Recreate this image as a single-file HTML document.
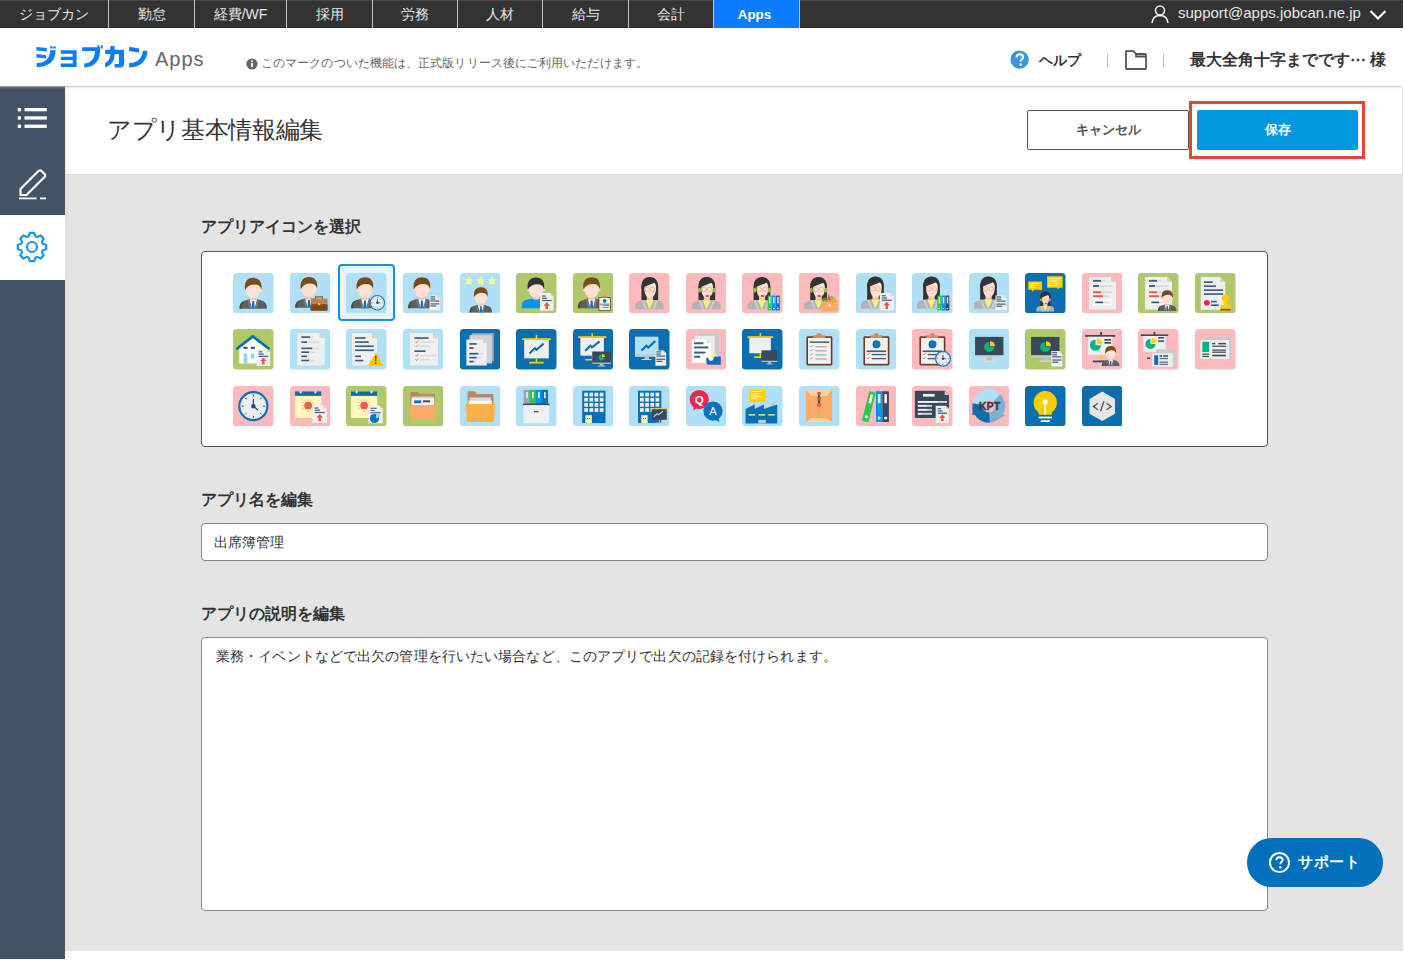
<!DOCTYPE html>
<html><head><meta charset="utf-8">
<style>
*{box-sizing:border-box;margin:0;padding:0}
html,body{width:1404px;height:960px;overflow:hidden;background:#fff;font-family:"Liberation Sans",sans-serif;color:#333}
.abs{position:absolute}
#topnav{position:absolute;left:0;top:0;width:1403px;height:28px;background:#333;box-shadow:inset 0 1px 0 #474747,inset 0 -1px 0 #2a2a2a}
#topnav .it{position:absolute;top:0;height:28px;line-height:29px;text-align:center;color:#e6e6e6;font-size:14px;border-right:1px solid #c4c4c4}
#topnav .apps{background:#0a7cff;color:#fff;font-weight:bold;border-right:1px solid #c4c4c4;font-size:13.4px;text-indent:-4px}
#hdr{position:absolute;left:0;top:28px;width:1401px;height:58px;background:#fff}
#side{position:absolute;left:0;top:86px;width:65px;height:873px;background:#435466}
#titlebar{position:absolute;left:65px;top:86px;width:1338px;height:88px;background:#fff;border-right:1.5px solid #e6e6e6}
#content{position:absolute;left:65px;top:174px;width:1338px;height:777px;background:#e4e4e4;box-shadow:inset 0 1px 1px rgba(0,0,0,.04)}
.lbl{position:absolute;left:201px;font-size:16px;font-weight:bold;color:#333;line-height:20px;white-space:nowrap}
.box{position:absolute;background:#fff;border:1px solid #555;border-radius:4px}
.ic{position:absolute;width:40px;height:40px}
</style></head><body>
<div id="topnav">
 <div class="it" style="left:0;width:109px">ジョブカン</div>
 <div class="it" style="left:109px;width:86px">勤怠</div>
 <div class="it" style="left:195px;width:92px">経費/WF</div>
 <div class="it" style="left:287px;width:86px">採用</div>
 <div class="it" style="left:373px;width:85px">労務</div>
 <div class="it" style="left:458px;width:85px">人材</div>
 <div class="it" style="left:543px;width:86px">給与</div>
 <div class="it" style="left:629px;width:85px">会計</div>
 <div class="it apps" style="left:714px;width:86px">Apps</div>
 <svg class="abs" style="left:1150px;top:4px" width="20" height="20" viewBox="0 0 20 20"><circle cx="10" cy="6.5" r="4.5" fill="none" stroke="#eee" stroke-width="1.6"/><path d="M2 19 C2.5 13.5 6 11.5 10 11.5 C14 11.5 17.5 13.5 18 19" fill="none" stroke="#eee" stroke-width="1.6"/></svg>
 <div class="abs" style="left:1178px;top:0;line-height:26px;font-size:15px;color:#e8e8e8">support@apps.jobcan.ne.jp</div>
 <svg class="abs" style="left:1369px;top:9px" width="18" height="12" viewBox="0 0 18 12"><path d="M1.5 2 L9 9.5 L16.5 2" fill="none" stroke="#fff" stroke-width="2.2"/></svg>
</div>
<div id="hdr">
 <svg class="abs" style="left:30px;top:12px" width="120" height="32" viewBox="0 0 120 32"><g fill="#0a7cff">
<path d="M6.4 7 L16.7 8.1 V11.5 L6.4 10.4Z M6.4 14.1 L16.2 15.2 V18.4 L6.4 17.5Z"/>
<path d="M20.1 10.3 H25.6 C25.6 20.5 19.5 27 6.8 27 V23.1 C15.5 23.1 20.1 18 20.1 10.3Z"/>
<rect x="20.1" y="6.3" width="2.4" height="2.2"/><rect x="23.2" y="6.3" width="2.4" height="2.2"/>
<path d="M30.8 10.3 H46.6 V26.9 H30.8 V23.5 H42.7 V20.1 H30.8 V16.7 H42.7 V13.7 H30.8Z"/>
<path d="M52.1 7.3 H70.1 V11.1 H52.1Z M65 11.1 H70.1 C70 21 64 27.4 54.3 27.4 V23.5 C61 23.5 65 18 65 11.1Z"/>
<path d="M67.3 5.2 L69.2 5.2 L69.6 8.6 L67.7 8.6Z M70.6 5.2 L72.5 5.2 L72.9 8.6 L71 8.6Z"/>
<path d="M75.2 9.8 H94 V14.1 H75.2Z M80.3 6 H84.6 V14 C84.6 20.5 82 25 75.2 27.4 V23 C79 21 80.3 18 80.3 14Z M88.9 9.8 H94 V24 C94 26.5 92.5 27.4 90.5 27.4 H84.6 V24 H88.9Z"/>
<path d="M99.1 6.8 L109 8.5 V12.4 L99.1 11.1Z M112.8 10.7 H117.5 C117 21 110 27.4 99.1 27.4 V23.1 C107 23.1 112.5 18 112.8 10.7Z"/>
</g></svg>
 <div class="abs" style="left:155px;top:18px;font-size:20px;color:#666;line-height:26px;letter-spacing:1px">Apps</div>
 <svg class="abs" style="left:246px;top:30px" width="12" height="12" viewBox="0 0 12 12"><circle cx="6" cy="6" r="5.6" fill="#666"/><rect x="5.1" y="5" width="1.8" height="4.2" fill="#fff"/><circle cx="6" cy="3.3" r="1" fill="#fff"/></svg>
 <div class="abs" style="left:261px;top:27px;font-size:11.8px;color:#666;line-height:16px;letter-spacing:0.09px;white-space:nowrap">このマークのついた機能は、正式版リリース後にご利用いただけます。</div>
 <svg class="abs" style="left:1010px;top:22px" width="20" height="20" viewBox="0 0 20 20"><circle cx="9.6" cy="9.6" r="9.2" fill="#3a97d9"/><path d="M6.6 7.4 C6.6 5.4 8 4.3 9.8 4.3 C11.7 4.3 13 5.5 13 7.2 C13 9.3 10.6 9.4 10.6 11.6" fill="none" stroke="#fff" stroke-width="2.1"/><circle cx="10.6" cy="14.6" r="1.3" fill="#fff"/></svg>
 <div class="abs" style="left:1039px;top:22px;font-size:14.3px;color:#333;line-height:20px;font-weight:bold">ヘルプ</div>
 <div class="abs" style="left:1107px;top:26px;width:1px;height:13px;background:#bbb"></div>
 <svg class="abs" style="left:1124px;top:21px" width="24" height="21" viewBox="0 0 24 21"><path d="M2 2.2 H9.5 L12 5 H21 Q22 5 22 6 V19 Q22 20 21 20 H3 Q2 20 2 19 Z M12 5 V7.5 H22" fill="none" stroke="#555" stroke-width="1.8" stroke-linejoin="round"/></svg>
 <div class="abs" style="left:1163px;top:26px;width:1px;height:13px;background:#bbb"></div>
 <div class="abs" style="left:1190px;top:22px;font-size:15.5px;color:#333;line-height:20px;font-weight:bold;white-space:nowrap">最大全角十字までです⋯ 様</div>
</div>
<div id="side">
 <svg class="abs" style="left:17px;top:22px" width="31" height="22" viewBox="0 0 31 22"><rect x="0.7" y="0" width="3.3" height="3.3" fill="#fff"/><rect x="7.5" y="0" width="22.3" height="3.3" fill="#fff"/><rect x="0.7" y="8.3" width="3.3" height="3.3" fill="#fff"/><rect x="7.5" y="8.3" width="22.3" height="3.3" fill="#fff"/><rect x="0.7" y="16.6" width="3.3" height="3.3" fill="#fff"/><rect x="7.5" y="16.6" width="22.3" height="3.3" fill="#fff"/></svg>
 <svg class="abs" style="left:17px;top:80px" width="32" height="34" viewBox="0 0 32 34"><path d="M3.5 28 V23 L21.5 5 Q23 3.6 24.5 5 L27.5 8 Q29 9.5 27.5 11 L9.5 29 H3.5 Z" fill="none" stroke="#fff" stroke-width="2.2" stroke-linejoin="round"/><rect x="2" y="31.5" width="17.5" height="1.8" fill="#fff"/><rect x="23" y="31.5" width="6" height="1.8" fill="#fff"/></svg>
 <div class="abs" style="left:0;top:129px;width:65px;height:65px;background:#fff"></div>
 <svg class="abs" style="left:15px;top:144px" width="34" height="34" viewBox="0 0 34 34"><path id="gear" fill="none" stroke="#1a9ae0" stroke-width="2.2" stroke-linejoin="round" d="M13.73 6.29 L14.75 2.78 L19.25 2.78 L20.27 6.29 L22.26 7.11 L25.46 5.35 L28.65 8.54 L26.89 11.74 L27.71 13.73 L31.22 14.75 L31.22 19.25 L27.71 20.27 L26.89 22.26 L28.65 25.46 L25.46 28.65 L22.26 26.89 L20.27 27.71 L19.25 31.22 L14.75 31.22 L13.73 27.71 L11.74 26.89 L8.54 28.65 L5.35 25.46 L7.11 22.26 L6.29 20.27 L2.78 19.25 L2.78 14.75 L6.29 13.73 L7.11 11.74 L5.35 8.54 L8.54 5.35 L11.74 7.11 Z"/><circle cx="17" cy="17" r="5" fill="none" stroke="#1a9ae0" stroke-width="2.2"/></svg>
</div>
<div id="titlebar">
 <div class="abs" style="left:42px;top:29px;font-size:24px;color:#333;line-height:30px;letter-spacing:-0.35px;white-space:nowrap">アプリ基本情報編集</div>
 <div class="abs" style="left:962px;top:24px;width:162px;height:40px;border:1px solid #555;border-radius:2px;text-align:center;line-height:38px;font-size:13px;font-weight:bold;color:#555">キャンセル</div>
 <div class="abs" style="left:1132px;top:24px;width:161px;height:40px;background:#0099dd;border-radius:2px;text-align:center;line-height:40px;font-size:13px;font-weight:bold;color:#fff">保存</div>
 <div class="abs" style="left:1124px;top:15px;width:176px;height:58px;border:3px solid #e8433a"></div>
</div>
<div id="content"></div>
<div class="abs" style="left:0;top:86px;width:1401px;height:4px;background:linear-gradient(rgba(180,180,180,.66) 0.5px,rgba(180,180,180,.22) 1.5px,rgba(180,180,180,.07) 2.5px,rgba(180,180,180,0) 3.5px)"></div>
<div class="abs" style="left:65px;top:86px;width:5px;height:88px;background:linear-gradient(90deg,rgba(0,0,0,.06),rgba(0,0,0,0))"></div>
<div class="lbl" style="top:217px">アプリアイコンを選択</div>
<div class="box" style="left:201px;top:251px;width:1067px;height:196px"></div>
<!--ICONS--><div style="position:absolute;left:338.3px;top:264.3px;width:56.5px;height:56.5px;border:2.2px solid #1592dc;border-radius:4px;background:#e8f3fc"></div><svg style="position:absolute;left:233.20px;top:272.50px" width="40.5" height="40.5" viewBox="0 0 40 40"><rect width="40" height="40" rx="3.5" fill="#afe0f6"/><path d="M6.5 35.2 C6.5 30.2 8.3 28.2 11.8 27.2 L16.5 25.8 H23.5 L28.2 27.2 C31.7 28.2 33.5 30.2 33.5 35.2 Z" fill="#5f5f5f"/><path d="M11 28 C9 29.5 8.5 31.5 8.5 35.2 H6.5 C6.5 31 7.6 29 11 28Z" fill="#4a4a4a"/><path d="M16.2 25.8 H23.8 L21.3 35.2 H18.7 Z" fill="#f4f4f4"/><path d="M15.6 26 L18.7 35.2 H16.6 L14.2 27 Z M24.4 26 L21.3 35.2 H23.4 L25.8 27Z" fill="#777"/><path d="M19.1 27.6 H20.9 L21.5 35.2 H18.5 Z" fill="#0b72c4"/><rect x="17.3" y="21.5" width="5.4" height="4.8" fill="#f5c8b3"/><path d="M17.3 25.2 Q20 27.2 22.7 25.2 V26 Q20 28 17.3 26Z" fill="#efb9a0"/><circle cx="12.7" cy="17.2" r="1.6" fill="#fad3c3"/><circle cx="27.3" cy="17.2" r="1.6" fill="#fad3c3"/><path d="M12.8 15 C12.8 10.5 16 9 20 9 C24 9 27.2 10.5 27.2 15 C27.2 21 24.7 24.9 20 24.9 C15.3 24.9 12.8 21 12.8 15 Z" fill="#fde1d5"/><path d="M11.9 16.8 C10.9 8.6 14.2 4.8 20 4.8 C25.8 4.8 29.1 8.6 28.1 16.2 C27.4 13.2 25 11.3 21.3 11.3 C17 11.3 13.6 13.2 11.9 16.8 Z" fill="#7b4a19"/></svg>
<svg style="position:absolute;left:289.78px;top:272.50px" width="40.5" height="40.5" viewBox="0 0 40 40"><rect width="40" height="40" rx="3.5" fill="#afe0f6"/><g transform="translate(-1.3 -0.9) scale(1)"><path d="M6.5 35.2 C6.5 30.2 8.3 28.2 11.8 27.2 L16.5 25.8 H23.5 L28.2 27.2 C31.7 28.2 33.5 30.2 33.5 35.2 Z" fill="#5f5f5f"/><path d="M11 28 C9 29.5 8.5 31.5 8.5 35.2 H6.5 C6.5 31 7.6 29 11 28Z" fill="#4a4a4a"/><path d="M16.2 25.8 H23.8 L21.3 35.2 H18.7 Z" fill="#f4f4f4"/><path d="M15.6 26 L18.7 35.2 H16.6 L14.2 27 Z M24.4 26 L21.3 35.2 H23.4 L25.8 27Z" fill="#777"/><path d="M19.1 27.6 H20.9 L21.5 35.2 H18.5 Z" fill="#0b72c4"/><rect x="17.3" y="21.5" width="5.4" height="4.8" fill="#f5c8b3"/><path d="M17.3 25.2 Q20 27.2 22.7 25.2 V26 Q20 28 17.3 26Z" fill="#efb9a0"/><circle cx="12.7" cy="17.2" r="1.6" fill="#fad3c3"/><circle cx="27.3" cy="17.2" r="1.6" fill="#fad3c3"/><path d="M12.8 15 C12.8 10.5 16 9 20 9 C24 9 27.2 10.5 27.2 15 C27.2 21 24.7 24.9 20 24.9 C15.3 24.9 12.8 21 12.8 15 Z" fill="#fde1d5"/><path d="M11.9 16.8 C10.9 8.6 14.2 4.8 20 4.8 C25.8 4.8 29.1 8.6 28.1 16.2 C27.4 13.2 25 11.3 21.3 11.3 C17 11.3 13.6 13.2 11.9 16.8 Z" fill="#7b4a19"/></g><path d="M24.7 23 H32.5 V26 H31.3 V24.2 H25.9 V26 H24.7Z" fill="#8a5a36"/><rect x="20.4" y="25.3" width="16.7" height="11.9" rx="1" fill="#b98250"/><rect x="20.4" y="30.8" width="16.7" height="6.4" rx="1" fill="#7d4a1a"/><rect x="27.7" y="29.6" width="2.2" height="2" fill="#ffcc00"/></svg>
<svg style="position:absolute;left:346.36px;top:272.50px" width="40.5" height="40.5" viewBox="0 0 40 40"><rect width="40" height="40" rx="3.5" fill="#afe0f6"/><g transform="translate(-1.3 -0.5) scale(1)"><path d="M6.5 35.2 C6.5 30.2 8.3 28.2 11.8 27.2 L16.5 25.8 H23.5 L28.2 27.2 C31.7 28.2 33.5 30.2 33.5 35.2 Z" fill="#5f5f5f"/><path d="M11 28 C9 29.5 8.5 31.5 8.5 35.2 H6.5 C6.5 31 7.6 29 11 28Z" fill="#4a4a4a"/><path d="M16.2 25.8 H23.8 L21.3 35.2 H18.7 Z" fill="#f4f4f4"/><path d="M15.6 26 L18.7 35.2 H16.6 L14.2 27 Z M24.4 26 L21.3 35.2 H23.4 L25.8 27Z" fill="#777"/><path d="M19.1 27.6 H20.9 L21.5 35.2 H18.5 Z" fill="#0b72c4"/><rect x="17.3" y="21.5" width="5.4" height="4.8" fill="#f5c8b3"/><path d="M17.3 25.2 Q20 27.2 22.7 25.2 V26 Q20 28 17.3 26Z" fill="#efb9a0"/><circle cx="12.7" cy="17.2" r="1.6" fill="#fad3c3"/><circle cx="27.3" cy="17.2" r="1.6" fill="#fad3c3"/><path d="M12.8 15 C12.8 10.5 16 9 20 9 C24 9 27.2 10.5 27.2 15 C27.2 21 24.7 24.9 20 24.9 C15.3 24.9 12.8 21 12.8 15 Z" fill="#fde1d5"/><path d="M11.9 16.8 C10.9 8.6 14.2 4.8 20 4.8 C25.8 4.8 29.1 8.6 28.1 16.2 C27.4 13.2 25 11.3 21.3 11.3 C17 11.3 13.6 13.2 11.9 16.8 Z" fill="#7b4a19"/></g><circle cx="31" cy="29.4" r="7.10" fill="#e8eef2" stroke="#1a7ecb" stroke-width="1.0"/><line x1="31.00" y1="24.54" x2="31.00" y2="23.47" stroke="#2f4d66" stroke-width="0.68"/><line x1="34.44" y1="25.96" x2="35.19" y2="25.21" stroke="#2f4d66" stroke-width="0.68"/><line x1="35.86" y1="29.40" x2="36.93" y2="29.40" stroke="#2f4d66" stroke-width="0.68"/><line x1="34.44" y1="32.84" x2="35.19" y2="33.59" stroke="#2f4d66" stroke-width="0.68"/><line x1="31.00" y1="34.26" x2="31.00" y2="35.33" stroke="#2f4d66" stroke-width="0.68"/><line x1="27.56" y1="32.84" x2="26.81" y2="33.59" stroke="#2f4d66" stroke-width="0.68"/><line x1="26.14" y1="29.40" x2="25.07" y2="29.40" stroke="#2f4d66" stroke-width="0.68"/><line x1="27.56" y1="25.96" x2="26.81" y2="25.21" stroke="#2f4d66" stroke-width="0.68"/><line x1="31" y1="29.4" x2="31" y2="25.75" stroke="#2f4d66" stroke-width="0.84"/><line x1="31" y1="29.4" x2="34.19" y2="29.40" stroke="#2f4d66" stroke-width="0.76"/><circle cx="31" cy="29.4" r="1.22" fill="#2f4d66"/></svg>
<svg style="position:absolute;left:402.94px;top:272.50px" width="40.5" height="40.5" viewBox="0 0 40 40"><rect width="40" height="40" rx="3.5" fill="#afe0f6"/><g transform="translate(-1.3 -0.5) scale(1)"><path d="M6.5 35.2 C6.5 30.2 8.3 28.2 11.8 27.2 L16.5 25.8 H23.5 L28.2 27.2 C31.7 28.2 33.5 30.2 33.5 35.2 Z" fill="#5f5f5f"/><path d="M11 28 C9 29.5 8.5 31.5 8.5 35.2 H6.5 C6.5 31 7.6 29 11 28Z" fill="#4a4a4a"/><path d="M16.2 25.8 H23.8 L21.3 35.2 H18.7 Z" fill="#f4f4f4"/><path d="M15.6 26 L18.7 35.2 H16.6 L14.2 27 Z M24.4 26 L21.3 35.2 H23.4 L25.8 27Z" fill="#777"/><path d="M19.1 27.6 H20.9 L21.5 35.2 H18.5 Z" fill="#0b72c4"/><rect x="17.3" y="21.5" width="5.4" height="4.8" fill="#f5c8b3"/><path d="M17.3 25.2 Q20 27.2 22.7 25.2 V26 Q20 28 17.3 26Z" fill="#efb9a0"/><circle cx="12.7" cy="17.2" r="1.6" fill="#fad3c3"/><circle cx="27.3" cy="17.2" r="1.6" fill="#fad3c3"/><path d="M12.8 15 C12.8 10.5 16 9 20 9 C24 9 27.2 10.5 27.2 15 C27.2 21 24.7 24.9 20 24.9 C15.3 24.9 12.8 21 12.8 15 Z" fill="#fde1d5"/><path d="M11.9 16.8 C10.9 8.6 14.2 4.8 20 4.8 C25.8 4.8 29.1 8.6 28.1 16.2 C27.4 13.2 25 11.3 21.3 11.3 C17 11.3 13.6 13.2 11.9 16.8 Z" fill="#7b4a19"/></g><g transform="translate(26.2 22.3) scale(1)"><path d="M0 0 H7.9 L10.5 2.6 V14.4 H0 Z" fill="#efefef"/><path d="M7.9 0 L10.5 2.6 H7.9 Z" fill="#d3d3d3"/><rect x="0.90" y="0.75" width="4.70" height="1.15" fill="#45627c"/><rect x="0.90" y="2.85" width="4.70" height="1.15" fill="#45627c"/><rect x="0.90" y="4.75" width="8.80" height="1.15" fill="#45627c"/><rect x="0.90" y="7.65" width="8.80" height="1.15" fill="#45627c"/><rect x="0.90" y="9.65" width="5.70" height="1.15" fill="#45627c"/><rect x="0.90" y="11.70" width="5.00" height="1.50" fill="#fff"/></g></svg>
<svg style="position:absolute;left:459.52px;top:272.50px" width="40.5" height="40.5" viewBox="0 0 40 40"><rect width="40" height="40" rx="3.5" fill="#afe0f6"/><polygon points="8.80,2.90 10.10,6.02 13.46,6.29 10.90,8.48 11.68,11.76 8.80,10.00 5.92,11.76 6.70,8.48 4.14,6.29 7.50,6.02" fill="#fbfb8a"/><polygon points="20.20,2.90 21.50,6.02 24.86,6.29 22.30,8.48 23.08,11.76 20.20,10.00 17.32,11.76 18.10,8.48 15.54,6.29 18.90,6.02" fill="#fbfb8a"/><polygon points="31.70,2.90 33.00,6.02 36.36,6.29 33.80,8.48 34.58,11.76 31.70,10.00 28.82,11.76 29.60,8.48 27.04,6.29 30.40,6.02" fill="#fbfb8a"/><g transform="translate(4.2 10.2) scale(0.82)"><path d="M6.5 35.2 C6.5 30.2 8.3 28.2 11.8 27.2 L16.5 25.8 H23.5 L28.2 27.2 C31.7 28.2 33.5 30.2 33.5 35.2 Z" fill="#5f5f5f"/><path d="M11 28 C9 29.5 8.5 31.5 8.5 35.2 H6.5 C6.5 31 7.6 29 11 28Z" fill="#4a4a4a"/><path d="M16.2 25.8 H23.8 L21.3 35.2 H18.7 Z" fill="#f4f4f4"/><path d="M15.6 26 L18.7 35.2 H16.6 L14.2 27 Z M24.4 26 L21.3 35.2 H23.4 L25.8 27Z" fill="#777"/><path d="M19.1 27.6 H20.9 L21.5 35.2 H18.5 Z" fill="#0b72c4"/><rect x="17.3" y="21.5" width="5.4" height="4.8" fill="#f5c8b3"/><path d="M17.3 25.2 Q20 27.2 22.7 25.2 V26 Q20 28 17.3 26Z" fill="#efb9a0"/><circle cx="12.7" cy="17.2" r="1.6" fill="#fad3c3"/><circle cx="27.3" cy="17.2" r="1.6" fill="#fad3c3"/><path d="M12.8 15 C12.8 10.5 16 9 20 9 C24 9 27.2 10.5 27.2 15 C27.2 21 24.7 24.9 20 24.9 C15.3 24.9 12.8 21 12.8 15 Z" fill="#fde1d5"/><path d="M11.9 16.8 C10.9 8.6 14.2 4.8 20 4.8 C25.8 4.8 29.1 8.6 28.1 16.2 C27.4 13.2 25 11.3 21.3 11.3 C17 11.3 13.6 13.2 11.9 16.8 Z" fill="#7b4a19"/></g></svg>
<svg style="position:absolute;left:516.10px;top:272.50px" width="40.5" height="40.5" viewBox="0 0 40 40"><rect width="40" height="40" rx="3.5" fill="#afc86b"/><g transform="translate(-0.3 -0.3) scale(1)"><path d="M6 35.2 V32 C6 28.5 9 26.5 13 26.2 L16.5 25.8 H23.5 L27 26.2 C31 26.5 34 28.5 34 32 V35.2 Z" fill="#0096f0"/><rect x="17.3" y="21.5" width="5.4" height="4.8" fill="#f5c8b3"/><path d="M17.3 25.2 Q20 27.2 22.7 25.2 V26 Q20 28 17.3 26Z" fill="#efb9a0"/><circle cx="12.7" cy="17.2" r="1.6" fill="#fad3c3"/><circle cx="27.3" cy="17.2" r="1.6" fill="#fad3c3"/><path d="M12.8 15 C12.8 10.5 16 9 20 9 C24 9 27.2 10.5 27.2 15 C27.2 21 24.7 24.9 20 24.9 C15.3 24.9 12.8 21 12.8 15 Z" fill="#fde1d5"/><path d="M11.9 16.8 C10.9 8.6 14.2 4.8 20 4.8 C25.8 4.8 29.1 8.6 28.1 16.2 C27.4 13.2 25 11.3 21.3 11.3 C17 11.3 13.6 13.2 11.9 16.8 Z" fill="#333"/></g><g transform="translate(23.7 19.8) scale(1)"><path d="M0 0 H10.2 L13.4 3.2 V17.4 H0 Z" fill="#efefef"/><path d="M10.2 0 L13.4 3.2 H10.2 Z" fill="#d3d3d3"/><rect x="2.00" y="2.4" width="3.60" height="1.15" fill="#3b5b78"/><rect x="2.00" y="4.6" width="5.00" height="1.15" fill="#3b5b78"/><rect x="2.00" y="6.8" width="9.50" height="1.15" fill="#3b5b78"/><path d="M6.70 8.90 L9.90 12.30 H7.90 V15.80 H5.50 V12.30 H3.50 Z" fill="#f0524a"/></g></svg>
<svg style="position:absolute;left:572.68px;top:272.50px" width="40.5" height="40.5" viewBox="0 0 40 40"><rect width="40" height="40" rx="3.5" fill="#afc86b"/><g transform="translate(-1.6 -0.5) scale(1)"><path d="M6.5 35.2 C6.5 30.2 8.3 28.2 11.8 27.2 L16.5 25.8 H23.5 L28.2 27.2 C31.7 28.2 33.5 30.2 33.5 35.2 Z" fill="#5f5f5f"/><path d="M11 28 C9 29.5 8.5 31.5 8.5 35.2 H6.5 C6.5 31 7.6 29 11 28Z" fill="#4a4a4a"/><path d="M16.2 25.8 H23.8 L21.3 35.2 H18.7 Z" fill="#f4f4f4"/><path d="M15.6 26 L18.7 35.2 H16.6 L14.2 27 Z M24.4 26 L21.3 35.2 H23.4 L25.8 27Z" fill="#777"/><path d="M19.1 27.6 H20.9 L21.5 35.2 H18.5 Z" fill="#0b72c4"/><rect x="17.3" y="21.5" width="5.4" height="4.8" fill="#f5c8b3"/><path d="M17.3 25.2 Q20 27.2 22.7 25.2 V26 Q20 28 17.3 26Z" fill="#efb9a0"/><circle cx="12.7" cy="17.2" r="1.6" fill="#fad3c3"/><circle cx="27.3" cy="17.2" r="1.6" fill="#fad3c3"/><path d="M12.8 15 C12.8 10.5 16 9 20 9 C24 9 27.2 10.5 27.2 15 C27.2 21 24.7 24.9 20 24.9 C15.3 24.9 12.8 21 12.8 15 Z" fill="#fde1d5"/><path d="M11.9 16.8 C10.9 8.6 14.2 4.8 20 4.8 C25.8 4.8 29.1 8.6 28.1 16.2 C27.4 13.2 25 11.3 21.3 11.3 C17 11.3 13.6 13.2 11.9 16.8 Z" fill="#7b4a19"/></g><g transform="translate(21.8 20.4) scale(0.47)"><rect x="7.3" y="7.2" width="25.7" height="28.8" rx="1.4" fill="#6e3a22"/><rect x="8.9" y="8.8" width="22.5" height="25.6" fill="#f1f1f1"/><path d="M14.2 6.2 H17.6 Q18 4 20.1 4 Q22.2 4 22.6 6.2 H26 V8.8 H14.2 Z" fill="#d88a5c"/><circle cx="20.2" cy="15" r="3.9" fill="#0a72c4"/><rect x="10.5" y="21.2" width="19.2" height="1.6" fill="#3b5b78"/><path d="M11 24.7 l0.9 0.9 l1.6 -1.9" fill="none" stroke="#f0524a" stroke-width="0.7"/><rect x="15.5" y="24.599999999999998" width="14" height="1.3" fill="#3b5b78"/><path d="M11 28.7 l0.9 0.9 l1.6 -1.9" fill="none" stroke="#f0524a" stroke-width="0.7"/><rect x="15.5" y="28.599999999999998" width="14" height="1.3" fill="#3b5b78"/></g></svg>
<svg style="position:absolute;left:629.26px;top:272.50px" width="40.5" height="40.5" viewBox="0 0 40 40"><rect width="40" height="40" rx="3.5" fill="#fdbabd"/><path d="M12.3 27 V14 C12.3 7.5 15.5 3.9 20.5 3.9 C25.5 3.9 28.8 7.5 28.8 14 V27 Z" fill="#333"/><path d="M6.2 35.8 V32.5 C6.2 29.2 8.2 27.8 11.5 27.3 L16.5 26.6 H24.5 L29.5 27.3 C32.8 27.8 34.3 29.2 34.3 32.5 V35.8 Z" fill="#b4b4b4"/><path d="M14.5 26.9 L17.8 35.8 H15.8 L12.6 27.3Z M26.5 26.9 L23.2 35.8 H25.2 L28.4 27.3Z" fill="#cdcdcd"/><path d="M16.5 26.6 H24.4 L20.3 35.8 Z" fill="#f6f27a"/><rect x="17.6" y="21.8" width="6" height="5.2" fill="#f7cdb9"/><path d="M17.6 24.6 Q20.6 26.2 23.6 24.6 V25.4 Q20.6 27 17.6 25.4Z" fill="#efb9a0"/><path d="M15.2 14.5 C15.2 9.5 17.5 8.2 20.8 8.2 C24 8.2 26.8 9.5 26.8 14.5 C26.8 21.2 23.9 24.5 20.8 24.5 C17.5 24.5 15.1 21.2 15.2 14.5Z" fill="#fde1d5"/><path d="M12.4 15.5 C12 8 15.3 4.2 20.5 4.2 C25.5 4.2 28.9 8 28.7 14.8 C27.9 12.2 26.6 10.4 25 9.6 C21.5 11.4 16.5 12.6 12.4 15.5 Z" fill="#333"/><g fill="none" stroke="#e8b394" stroke-width="0.85"><circle cx="17.9" cy="16.2" r="2.2"/><circle cx="23.3" cy="16.2" r="2.2"/><path d="M20 16 H20.8"/></g></svg>
<svg style="position:absolute;left:685.84px;top:272.50px" width="40.5" height="40.5" viewBox="0 0 40 40"><rect width="40" height="40" rx="3.5" fill="#fdbabd"/><path d="M12.3 27 V14 C12.3 7.5 15.5 3.9 20.5 3.9 C25.5 3.9 28.8 7.5 28.8 14 V27 Z" fill="#333"/><path d="M6.2 35.8 V32.5 C6.2 29.2 8.2 27.8 11.5 27.3 L16.5 26.6 H24.5 L29.5 27.3 C32.8 27.8 34.3 29.2 34.3 32.5 V35.8 Z" fill="#b4b4b4"/><path d="M14.5 26.9 L17.8 35.8 H15.8 L12.6 27.3Z M26.5 26.9 L23.2 35.8 H25.2 L28.4 27.3Z" fill="#cdcdcd"/><path d="M16.5 26.6 H24.4 L20.3 35.8 Z" fill="#f6f27a"/><rect x="17.6" y="21.8" width="6" height="5.2" fill="#f7cdb9"/><path d="M17.6 24.6 Q20.6 26.2 23.6 24.6 V25.4 Q20.6 27 17.6 25.4Z" fill="#efb9a0"/><path d="M15.2 14.5 C15.2 9.5 17.5 8.2 20.8 8.2 C24 8.2 26.8 9.5 26.8 14.5 C26.8 21.2 23.9 24.5 20.8 24.5 C17.5 24.5 15.1 21.2 15.2 14.5Z" fill="#fde1d5"/><path d="M12.4 15.5 C12 8 15.3 4.2 20.5 4.2 C25.5 4.2 28.9 8 28.7 14.8 C27.9 12.2 26.6 10.4 25 9.6 C21.5 11.4 16.5 12.6 12.4 15.5 Z" fill="#333"/><g fill="none" stroke="#e8b394" stroke-width="0.85"><circle cx="17.9" cy="16.2" r="2.2"/><circle cx="23.3" cy="16.2" r="2.2"/><path d="M20 16 H20.8"/></g><ellipse cx="13.4" cy="17" rx="1.5" ry="2.4" fill="#8ac43f"/><ellipse cx="27.8" cy="17" rx="1.5" ry="2.4" fill="#8ac43f"/><path d="M27.5 19 Q27 22.5 22.5 22.8" fill="none" stroke="#555" stroke-width="0.5"/><ellipse cx="21" cy="22.7" rx="1.8" ry="1" fill="#e8413a"/></svg>
<svg style="position:absolute;left:742.42px;top:272.50px" width="40.5" height="40.5" viewBox="0 0 40 40"><rect width="40" height="40" rx="3.5" fill="#fdbabd"/><g transform="translate(-0.8 0) scale(1)"><path d="M12.3 27 V14 C12.3 7.5 15.5 3.9 20.5 3.9 C25.5 3.9 28.8 7.5 28.8 14 V27 Z" fill="#333"/><path d="M6.2 35.8 V32.5 C6.2 29.2 8.2 27.8 11.5 27.3 L16.5 26.6 H24.5 L29.5 27.3 C32.8 27.8 34.3 29.2 34.3 32.5 V35.8 Z" fill="#b4b4b4"/><path d="M14.5 26.9 L17.8 35.8 H15.8 L12.6 27.3Z M26.5 26.9 L23.2 35.8 H25.2 L28.4 27.3Z" fill="#cdcdcd"/><path d="M16.5 26.6 H24.4 L20.3 35.8 Z" fill="#f6f27a"/><rect x="17.6" y="21.8" width="6" height="5.2" fill="#f7cdb9"/><path d="M17.6 24.6 Q20.6 26.2 23.6 24.6 V25.4 Q20.6 27 17.6 25.4Z" fill="#efb9a0"/><path d="M15.2 14.5 C15.2 9.5 17.5 8.2 20.8 8.2 C24 8.2 26.8 9.5 26.8 14.5 C26.8 21.2 23.9 24.5 20.8 24.5 C17.5 24.5 15.1 21.2 15.2 14.5Z" fill="#fde1d5"/><path d="M12.4 15.5 C12 8 15.3 4.2 20.5 4.2 C25.5 4.2 28.9 8 28.7 14.8 C27.9 12.2 26.6 10.4 25 9.6 C21.5 11.4 16.5 12.6 12.4 15.5 Z" fill="#333"/><g fill="none" stroke="#e8b394" stroke-width="0.85"><circle cx="17.9" cy="16.2" r="2.2"/><circle cx="23.3" cy="16.2" r="2.2"/><path d="M20 16 H20.8"/></g><ellipse cx="13.4" cy="17" rx="1.5" ry="2.4" fill="#8ac43f"/><ellipse cx="27.8" cy="17" rx="1.5" ry="2.4" fill="#8ac43f"/><path d="M27.5 19 Q27 22.5 22.5 22.8" fill="none" stroke="#555" stroke-width="0.5"/><ellipse cx="21" cy="22.7" rx="1.8" ry="1" fill="#e8413a"/></g><rect x="25.4" y="22.3" width="3.8" height="14.8" rx="0.4" fill="#2dc653"/><rect x="26.74" y="23.78" width="1.38" height="6.22" fill="#f2f2f2"/><circle cx="27.30" cy="35.03" r="0.81" fill="#f2f2f2"/><rect x="29.45" y="22.3" width="3.8" height="14.8" rx="0.4" fill="#0096f0"/><rect x="30.79" y="23.78" width="1.38" height="6.22" fill="#f2f2f2"/><circle cx="31.35" cy="35.03" r="0.81" fill="#f2f2f2"/><rect x="33.5" y="22.3" width="3.8" height="14.8" rx="0.4" fill="#0a72c4"/><rect x="34.84" y="23.78" width="1.38" height="6.22" fill="#f2f2f2"/><circle cx="35.40" cy="35.03" r="0.81" fill="#f2f2f2"/></svg>
<svg style="position:absolute;left:799.00px;top:272.50px" width="40.5" height="40.5" viewBox="0 0 40 40"><rect width="40" height="40" rx="3.5" fill="#fdbabd"/><g transform="translate(-1.2 0) scale(1)"><path d="M12.3 27 V14 C12.3 7.5 15.5 3.9 20.5 3.9 C25.5 3.9 28.8 7.5 28.8 14 V27 Z" fill="#333"/><path d="M6.2 35.8 V32.5 C6.2 29.2 8.2 27.8 11.5 27.3 L16.5 26.6 H24.5 L29.5 27.3 C32.8 27.8 34.3 29.2 34.3 32.5 V35.8 Z" fill="#b4b4b4"/><path d="M14.5 26.9 L17.8 35.8 H15.8 L12.6 27.3Z M26.5 26.9 L23.2 35.8 H25.2 L28.4 27.3Z" fill="#cdcdcd"/><path d="M16.5 26.6 H24.4 L20.3 35.8 Z" fill="#f6f27a"/><rect x="17.6" y="21.8" width="6" height="5.2" fill="#f7cdb9"/><path d="M17.6 24.6 Q20.6 26.2 23.6 24.6 V25.4 Q20.6 27 17.6 25.4Z" fill="#efb9a0"/><path d="M15.2 14.5 C15.2 9.5 17.5 8.2 20.8 8.2 C24 8.2 26.8 9.5 26.8 14.5 C26.8 21.2 23.9 24.5 20.8 24.5 C17.5 24.5 15.1 21.2 15.2 14.5Z" fill="#fde1d5"/><path d="M12.4 15.5 C12 8 15.3 4.2 20.5 4.2 C25.5 4.2 28.9 8 28.7 14.8 C27.9 12.2 26.6 10.4 25 9.6 C21.5 11.4 16.5 12.6 12.4 15.5 Z" fill="#333"/><g fill="none" stroke="#e8b394" stroke-width="0.85"><circle cx="17.9" cy="16.2" r="2.2"/><circle cx="23.3" cy="16.2" r="2.2"/><path d="M20 16 H20.8"/></g><ellipse cx="13.4" cy="17" rx="1.5" ry="2.4" fill="#8ac43f"/><ellipse cx="27.8" cy="17" rx="1.5" ry="2.4" fill="#8ac43f"/><path d="M27.5 19 Q27 22.5 22.5 22.8" fill="none" stroke="#555" stroke-width="0.5"/><ellipse cx="21" cy="22.7" rx="1.8" ry="1" fill="#e8413a"/></g><circle cx="25.5" cy="26.8" r="2.6" fill="#2aa84a"/><circle cx="32.2" cy="25.3" r="2.6" fill="#8ac43f"/><path d="M28 27 L29.3 20.5 L31 26.5Z" fill="#e8413a"/><circle cx="35.5" cy="26.5" r="1.5" fill="#ffb400"/><rect x="22.2" y="27.4" width="16" height="10.8" fill="#fbab67"/><rect x="22.2" y="27.4" width="16" height="1.2" fill="#e89555"/><rect x="28.8" y="31.3" width="2.8" height="1.3" fill="#fff"/></svg>
<svg style="position:absolute;left:855.58px;top:272.50px" width="40.5" height="40.5" viewBox="0 0 40 40"><rect width="40" height="40" rx="3.5" fill="#afe0f6"/><g transform="translate(-1.3 -0.5) scale(1)"><path d="M12.3 27 V14 C12.3 7.5 15.5 3.9 20.5 3.9 C25.5 3.9 28.8 7.5 28.8 14 V27 Z" fill="#333"/><path d="M6.2 35.8 V32.5 C6.2 29.2 8.2 27.8 11.5 27.3 L16.5 26.6 H24.5 L29.5 27.3 C32.8 27.8 34.3 29.2 34.3 32.5 V35.8 Z" fill="#b4b4b4"/><path d="M14.5 26.9 L17.8 35.8 H15.8 L12.6 27.3Z M26.5 26.9 L23.2 35.8 H25.2 L28.4 27.3Z" fill="#cdcdcd"/><path d="M16.5 26.6 H24.4 L20.3 35.8 Z" fill="#f6f27a"/><rect x="17.6" y="21.8" width="6" height="5.2" fill="#f7cdb9"/><path d="M17.6 24.6 Q20.6 26.2 23.6 24.6 V25.4 Q20.6 27 17.6 25.4Z" fill="#efb9a0"/><path d="M15.2 14.5 C15.2 9.5 17.5 8.2 20.8 8.2 C24 8.2 26.8 9.5 26.8 14.5 C26.8 21.2 23.9 24.5 20.8 24.5 C17.5 24.5 15.1 21.2 15.2 14.5Z" fill="#fde1d5"/><path d="M12.4 15.5 C12 8 15.3 4.2 20.5 4.2 C25.5 4.2 28.9 8 28.7 14.8 C27.9 12.2 26.6 10.4 25 9.6 C21.5 11.4 16.5 12.6 12.4 15.5 Z" fill="#333"/><g fill="none" stroke="#e8b394" stroke-width="0.85"><circle cx="17.9" cy="16.2" r="2.2"/><circle cx="23.3" cy="16.2" r="2.2"/><path d="M20 16 H20.8"/></g></g><g transform="translate(23.4 19.5) scale(1)"><path d="M0 0 H10.8 L14 3.2 V17.6 H0 Z" fill="#efefef"/><path d="M10.8 0 L14 3.2 H10.8 Z" fill="#d3d3d3"/><rect x="2.09" y="2.4" width="3.76" height="1.15" fill="#3b5b78"/><rect x="2.09" y="4.6" width="5.22" height="1.15" fill="#3b5b78"/><rect x="2.09" y="6.8" width="9.93" height="1.15" fill="#3b5b78"/><path d="M7.00 9.00 L10.20 12.44 H8.20 V15.98 H5.80 V12.44 H3.80 Z" fill="#f0524a"/></g></svg>
<svg style="position:absolute;left:912.16px;top:272.50px" width="40.5" height="40.5" viewBox="0 0 40 40"><rect width="40" height="40" rx="3.5" fill="#afe0f6"/><g transform="translate(-1.3 -0.5) scale(1)"><path d="M12.3 27 V14 C12.3 7.5 15.5 3.9 20.5 3.9 C25.5 3.9 28.8 7.5 28.8 14 V27 Z" fill="#333"/><path d="M6.2 35.8 V32.5 C6.2 29.2 8.2 27.8 11.5 27.3 L16.5 26.6 H24.5 L29.5 27.3 C32.8 27.8 34.3 29.2 34.3 32.5 V35.8 Z" fill="#b4b4b4"/><path d="M14.5 26.9 L17.8 35.8 H15.8 L12.6 27.3Z M26.5 26.9 L23.2 35.8 H25.2 L28.4 27.3Z" fill="#cdcdcd"/><path d="M16.5 26.6 H24.4 L20.3 35.8 Z" fill="#f6f27a"/><rect x="17.6" y="21.8" width="6" height="5.2" fill="#f7cdb9"/><path d="M17.6 24.6 Q20.6 26.2 23.6 24.6 V25.4 Q20.6 27 17.6 25.4Z" fill="#efb9a0"/><path d="M15.2 14.5 C15.2 9.5 17.5 8.2 20.8 8.2 C24 8.2 26.8 9.5 26.8 14.5 C26.8 21.2 23.9 24.5 20.8 24.5 C17.5 24.5 15.1 21.2 15.2 14.5Z" fill="#fde1d5"/><path d="M12.4 15.5 C12 8 15.3 4.2 20.5 4.2 C25.5 4.2 28.9 8 28.7 14.8 C27.9 12.2 26.6 10.4 25 9.6 C21.5 11.4 16.5 12.6 12.4 15.5 Z" fill="#333"/><g fill="none" stroke="#e8b394" stroke-width="0.85"><circle cx="17.9" cy="16.2" r="2.2"/><circle cx="23.3" cy="16.2" r="2.2"/><path d="M20 16 H20.8"/></g></g><rect x="25.1" y="22.3" width="3.75" height="14.8" rx="0.4" fill="#2dc653"/><rect x="26.42" y="23.78" width="1.36" height="6.22" fill="#f2f2f2"/><circle cx="26.98" cy="35.03" r="0.80" fill="#f2f2f2"/><rect x="29.1" y="22.3" width="3.75" height="14.8" rx="0.4" fill="#0096f0"/><rect x="30.42" y="23.78" width="1.36" height="6.22" fill="#f2f2f2"/><circle cx="30.98" cy="35.03" r="0.80" fill="#f2f2f2"/><rect x="33.1" y="22.3" width="3.75" height="14.8" rx="0.4" fill="#364a5c"/><rect x="34.42" y="23.78" width="1.36" height="6.22" fill="#f2f2f2"/><circle cx="34.98" cy="35.03" r="0.80" fill="#f2f2f2"/></svg>
<svg style="position:absolute;left:968.74px;top:272.50px" width="40.5" height="40.5" viewBox="0 0 40 40"><rect width="40" height="40" rx="3.5" fill="#afe0f6"/><g transform="translate(-1.3 -0.5) scale(1)"><path d="M12.3 27 V14 C12.3 7.5 15.5 3.9 20.5 3.9 C25.5 3.9 28.8 7.5 28.8 14 V27 Z" fill="#333"/><path d="M6.2 35.8 V32.5 C6.2 29.2 8.2 27.8 11.5 27.3 L16.5 26.6 H24.5 L29.5 27.3 C32.8 27.8 34.3 29.2 34.3 32.5 V35.8 Z" fill="#b4b4b4"/><path d="M14.5 26.9 L17.8 35.8 H15.8 L12.6 27.3Z M26.5 26.9 L23.2 35.8 H25.2 L28.4 27.3Z" fill="#cdcdcd"/><path d="M16.5 26.6 H24.4 L20.3 35.8 Z" fill="#f6f27a"/><rect x="17.6" y="21.8" width="6" height="5.2" fill="#f7cdb9"/><path d="M17.6 24.6 Q20.6 26.2 23.6 24.6 V25.4 Q20.6 27 17.6 25.4Z" fill="#efb9a0"/><path d="M15.2 14.5 C15.2 9.5 17.5 8.2 20.8 8.2 C24 8.2 26.8 9.5 26.8 14.5 C26.8 21.2 23.9 24.5 20.8 24.5 C17.5 24.5 15.1 21.2 15.2 14.5Z" fill="#fde1d5"/><path d="M12.4 15.5 C12 8 15.3 4.2 20.5 4.2 C25.5 4.2 28.9 8 28.7 14.8 C27.9 12.2 26.6 10.4 25 9.6 C21.5 11.4 16.5 12.6 12.4 15.5 Z" fill="#333"/><g fill="none" stroke="#e8b394" stroke-width="0.85"><circle cx="17.9" cy="16.2" r="2.2"/><circle cx="23.3" cy="16.2" r="2.2"/><path d="M20 16 H20.8"/></g></g><g transform="translate(26.1 22.3) scale(1)"><path d="M0 0 H8.200000000000001 L10.8 2.6 V14.8 H0 Z" fill="#efefef"/><path d="M8.200000000000001 0 L10.8 2.6 H8.200000000000001 Z" fill="#d3d3d3"/><rect x="0.93" y="0.77" width="4.83" height="1.18" fill="#45627c"/><rect x="0.93" y="2.93" width="4.83" height="1.18" fill="#45627c"/><rect x="0.93" y="4.88" width="9.05" height="1.18" fill="#45627c"/><rect x="0.93" y="7.86" width="9.05" height="1.18" fill="#45627c"/><rect x="0.93" y="9.92" width="5.86" height="1.18" fill="#45627c"/><rect x="0.93" y="12.03" width="5.14" height="1.54" fill="#fff"/></g></svg>
<svg style="position:absolute;left:1025.32px;top:272.50px" width="40.5" height="40.5" viewBox="0 0 40 40"><rect width="40" height="40" rx="3.5" fill="#0b6eae"/><path d="M3.2 8.3 H16.8 V16.5 H9 L7.3 18.6 L6.5 16.5 H3.2Z" fill="#ffd000"/><g fill="#fff7b0"><rect x="5" y="10" width="8.5" height="0.8"/><rect x="5" y="11.8" width="7" height="0.8"/><rect x="5" y="13.6" width="5.5" height="0.8"/></g><path d="M21.8 3.2 H37.2 V14.6 H33.5 L32.5 16.4 L31.5 14.6 H21.8Z" fill="#ffd000"/><g fill="#fff7b0"><rect x="23.3" y="4.8" width="12" height="0.8"/><rect x="23.3" y="6.6" width="11" height="0.8"/><rect x="23.3" y="8.4" width="9.5" height="0.8"/><rect x="23.3" y="10.2" width="11" height="0.8"/><rect x="23.3" y="12" width="8" height="0.8"/></g><g transform="translate(7.35 15.8) scale(0.62)"><path d="M12.3 27 V14 C12.3 7.5 15.5 3.9 20.5 3.9 C25.5 3.9 28.8 7.5 28.8 14 V27 Z" fill="#333"/><path d="M6.2 35.8 V32.5 C6.2 29.2 8.2 27.8 11.5 27.3 L16.5 26.6 H24.5 L29.5 27.3 C32.8 27.8 34.3 29.2 34.3 32.5 V35.8 Z" fill="#b4b4b4"/><path d="M14.5 26.9 L17.8 35.8 H15.8 L12.6 27.3Z M26.5 26.9 L23.2 35.8 H25.2 L28.4 27.3Z" fill="#cdcdcd"/><path d="M16.5 26.6 H24.4 L20.3 35.8 Z" fill="#f6f27a"/><rect x="17.6" y="21.8" width="6" height="5.2" fill="#f7cdb9"/><path d="M17.6 24.6 Q20.6 26.2 23.6 24.6 V25.4 Q20.6 27 17.6 25.4Z" fill="#efb9a0"/><path d="M15.2 14.5 C15.2 9.5 17.5 8.2 20.8 8.2 C24 8.2 26.8 9.5 26.8 14.5 C26.8 21.2 23.9 24.5 20.8 24.5 C17.5 24.5 15.1 21.2 15.2 14.5Z" fill="#fde1d5"/><path d="M12.4 15.5 C12 8 15.3 4.2 20.5 4.2 C25.5 4.2 28.9 8 28.7 14.8 C27.9 12.2 26.6 10.4 25 9.6 C21.5 11.4 16.5 12.6 12.4 15.5 Z" fill="#333"/><g fill="none" stroke="#e8b394" stroke-width="0.85"><circle cx="17.9" cy="16.2" r="2.2"/><circle cx="23.3" cy="16.2" r="2.2"/><path d="M20 16 H20.8"/></g><ellipse cx="13.4" cy="17" rx="1.5" ry="2.4" fill="#8ac43f"/><ellipse cx="27.8" cy="17" rx="1.5" ry="2.4" fill="#8ac43f"/><path d="M27.5 19 Q27 22.5 22.5 22.8" fill="none" stroke="#555" stroke-width="0.5"/><ellipse cx="21" cy="22.7" rx="1.8" ry="1" fill="#e8413a"/></g></svg>
<svg style="position:absolute;left:1081.90px;top:272.50px" width="40.5" height="40.5" viewBox="0 0 40 40"><rect width="40" height="40" rx="3.5" fill="#fdbabd"/><path d="M6.9 3.9 H28.6 L33.6 8.9 V36 H6.9 Z" fill="#efefef"/><path d="M28.6 3.9 L33.6 8.9 H28.6Z" fill="#d3d3d3"/><rect x="10.9" y="6.80" width="8.10" height="1.8" fill="#3b5b78"/><rect x="19" y="6.80" width="4.60" height="1.8" fill="#d8dcdf"/><rect x="10.9" y="11.95" width="6.00" height="1.8" fill="#3b5b78"/><rect x="16.9" y="11.95" width="12.80" height="1.8" fill="#d8dcdf"/><rect x="10.9" y="18.10" width="8.10" height="1.8" fill="#f0524a"/><rect x="19" y="18.10" width="10.70" height="1.8" fill="#d8dcdf"/><rect x="10.9" y="22.00" width="10.10" height="1.8" fill="#f0524a"/><rect x="21" y="22.00" width="5.70" height="1.8" fill="#d8dcdf"/><rect x="10.9" y="26.1" width="18.8" height="5.5" fill="#fff"/><rect x="13.2" y="28.1" width="7.8" height="1.8" fill="#3b5b78"/><rect x="21" y="28.1" width="6.6" height="1.8" fill="#d8dcdf"/></svg>
<svg style="position:absolute;left:1138.48px;top:272.50px" width="40.5" height="40.5" viewBox="0 0 40 40"><rect width="40" height="40" rx="3.5" fill="#afc86b"/><path d="M6.9 3.9 H28.6 L33.6 8.9 V36 H6.9 Z" fill="#efefef"/><path d="M28.6 3.9 L33.6 8.9 H28.6Z" fill="#d3d3d3"/><rect x="10.9" y="6.80" width="8.10" height="1.8" fill="#3b5b78"/><rect x="19" y="6.80" width="4.60" height="1.8" fill="#d8dcdf"/><rect x="10.9" y="11.95" width="6.00" height="1.8" fill="#3b5b78"/><rect x="16.9" y="11.95" width="12.80" height="1.8" fill="#d8dcdf"/><rect x="10.9" y="18.10" width="8.10" height="1.8" fill="#f0524a"/><rect x="19" y="18.10" width="10.70" height="1.8" fill="#d8dcdf"/><rect x="10.9" y="22.00" width="10.10" height="1.8" fill="#f0524a"/><rect x="21" y="22.00" width="5.70" height="1.8" fill="#d8dcdf"/><rect x="10.9" y="26.1" width="18.8" height="5.5" fill="#fff"/><rect x="13.2" y="28.1" width="7.8" height="1.8" fill="#3b5b78"/><rect x="21" y="28.1" width="6.6" height="1.8" fill="#d8dcdf"/><g transform="translate(15.5 13.9) scale(0.67)"><path d="M6.5 35.2 C6.5 30.2 8.3 28.2 11.8 27.2 L16.5 25.8 H23.5 L28.2 27.2 C31.7 28.2 33.5 30.2 33.5 35.2 Z" fill="#5f5f5f"/><path d="M11 28 C9 29.5 8.5 31.5 8.5 35.2 H6.5 C6.5 31 7.6 29 11 28Z" fill="#4a4a4a"/><path d="M16.2 25.8 H23.8 L21.3 35.2 H18.7 Z" fill="#f4f4f4"/><path d="M15.6 26 L18.7 35.2 H16.6 L14.2 27 Z M24.4 26 L21.3 35.2 H23.4 L25.8 27Z" fill="#777"/><path d="M19.1 27.6 H20.9 L21.5 35.2 H18.5 Z" fill="#0b72c4"/><rect x="17.3" y="21.5" width="5.4" height="4.8" fill="#f5c8b3"/><path d="M17.3 25.2 Q20 27.2 22.7 25.2 V26 Q20 28 17.3 26Z" fill="#efb9a0"/><circle cx="12.7" cy="17.2" r="1.6" fill="#fad3c3"/><circle cx="27.3" cy="17.2" r="1.6" fill="#fad3c3"/><path d="M12.8 15 C12.8 10.5 16 9 20 9 C24 9 27.2 10.5 27.2 15 C27.2 21 24.7 24.9 20 24.9 C15.3 24.9 12.8 21 12.8 15 Z" fill="#fde1d5"/><path d="M11.9 16.8 C10.9 8.6 14.2 4.8 20 4.8 C25.8 4.8 29.1 8.6 28.1 16.2 C27.4 13.2 25 11.3 21.3 11.3 C17 11.3 13.6 13.2 11.9 16.8 Z" fill="#7b4a19"/></g></svg>
<svg style="position:absolute;left:1195.06px;top:272.50px" width="40.5" height="40.5" viewBox="0 0 40 40"><rect width="40" height="40" rx="3.5" fill="#afc86b"/><path d="M5.7 3.9 H24.8 L29.8 8.9 V36.4 H5.7 Z" fill="#efefef"/><path d="M24.8 3.9 L29.8 8.9 H24.8Z" fill="#d3d3d3"/><rect x="8.8" y="8.2" width="8.8" height="1.6" fill="#3b5b78"/><rect x="8.8" y="12.2" width="12" height="1.6" fill="#3b5b78"/><rect x="8.8" y="16.1" width="19" height="1.6" fill="#3b5b78"/><rect x="8.8" y="20" width="19" height="1.6" fill="#3b5b78"/><circle cx="11.7" cy="29.4" r="2.8" fill="#ff1a4a"/><rect x="15.9" y="27.4" width="5.6" height="1.6" fill="#3b5b78"/><rect x="15.9" y="31" width="7.6" height="1.6" fill="#3b5b78"/><circle cx="30.2" cy="25.3" r="3.7" fill="#ffcc00"/><path d="M28.3 27.5 H32.1 V31.5 H34.2 Q35.2 31.5 35.2 32.5 V35.5 H25.2 V32.5 Q25.2 31.5 26.2 31.5 H28.3Z" fill="#ffcc00"/><rect x="25.2" y="35.4" width="10" height="1.7" fill="#7a5636"/></svg>
<svg style="position:absolute;left:233.20px;top:329.08px" width="40.5" height="40.5" viewBox="0 0 40 40"><rect width="40" height="40" rx="3.5" fill="#afc86b"/><path d="M6.2 18 L19.6 7.5 L33 18 V34 H6.2Z" fill="#fff"/><path d="M4.2 19.2 L19.6 7.3 L35 19.2" fill="none" stroke="#0a6cb0" stroke-width="2.6" stroke-linecap="round" stroke-linejoin="round"/><rect x="10.3" y="17.6" width="4" height="2" fill="#364a5c"/><rect x="17.6" y="17.6" width="4" height="2" fill="#364a5c"/><rect x="10.5" y="24.2" width="3.6" height="9.8" fill="#8fd3f5"/><rect x="17.8" y="24.2" width="3.3" height="5" fill="#8fd3f5"/><g transform="translate(23.3 19.6) scale(1)"><path d="M0 0 H10.2 L13.4 3.2 V17 H0 Z" fill="#efefef"/><path d="M10.2 0 L13.4 3.2 H10.2 Z" fill="#d3d3d3"/><rect x="2.00" y="2.4" width="3.60" height="1.15" fill="#3b5b78"/><rect x="2.00" y="4.6" width="5.00" height="1.15" fill="#3b5b78"/><rect x="2.00" y="6.8" width="9.50" height="1.15" fill="#3b5b78"/><path d="M6.70 8.70 L9.90 12.02 H7.90 V15.44 H5.50 V12.02 H3.50 Z" fill="#f0524a"/></g></svg>
<svg style="position:absolute;left:289.78px;top:329.08px" width="40.5" height="40.5" viewBox="0 0 40 40"><rect width="40" height="40" rx="3.5" fill="#afe0f6"/><path d="M7.1 4 H29.200000000000003 L34.2 9 V36 H7.1 Z" fill="#efefef"/><path d="M29.200000000000003 4 L34.2 9 H29.200000000000003Z" fill="#d3d3d3"/><rect x="11.2" y="7.20" width="8.70" height="1.6" fill="#3b5b78"/><rect x="19.9" y="7.20" width="2.70" height="1.6" fill="#d8dcdf"/><rect x="11.2" y="12.20" width="5.85" height="1.6" fill="#3b5b78"/><rect x="17.05" y="12.20" width="12.05" height="1.6" fill="#d8dcdf"/><rect x="11.2" y="18.30" width="10.90" height="1.6" fill="#3b5b78"/><rect x="22.1" y="18.30" width="7.00" height="1.6" fill="#d8dcdf"/><rect x="11.2" y="22.10" width="7.80" height="1.6" fill="#3b5b78"/><rect x="19" y="22.10" width="5.50" height="1.6" fill="#d8dcdf"/><rect x="11.2" y="26.20" width="5.80" height="1.6" fill="#3b5b78"/><rect x="17" y="26.20" width="2.50" height="1.6" fill="#d8dcdf"/><rect x="11.2" y="30.30" width="7.80" height="1.6" fill="#3b5b78"/><rect x="19" y="30.30" width="5.50" height="1.6" fill="#d8dcdf"/></svg>
<svg style="position:absolute;left:346.36px;top:329.08px" width="40.5" height="40.5" viewBox="0 0 40 40"><rect width="40" height="40" rx="3.5" fill="#afe0f6"/><path d="M6 4 H25.6 L30.6 9 V36 H6 Z" fill="#efefef"/><path d="M25.6 4 L30.6 9 H25.6Z" fill="#d3d3d3"/><rect x="9" y="8.10" width="10.20" height="1.6" fill="#3b5b78"/><rect x="9" y="12.10" width="13.40" height="1.6" fill="#3b5b78"/><rect x="9" y="16.20" width="18.40" height="1.6" fill="#3b5b78"/><rect x="9" y="20.20" width="18.40" height="1.6" fill="#3b5b78"/><rect x="9" y="26.20" width="5.80" height="1.6" fill="#3b5b78"/><rect x="9" y="30.40" width="8.10" height="1.6" fill="#3b5b78"/><path d="M29.4 22.6 L37 36.2 H21.8Z" fill="#ffc800"/><rect x="28.7" y="26.5" width="1.4" height="5.2" fill="#364a5c"/><rect x="28.7" y="32.8" width="1.4" height="1.5" fill="#364a5c"/></svg>
<svg style="position:absolute;left:402.94px;top:329.08px" width="40.5" height="40.5" viewBox="0 0 40 40"><rect width="40" height="40" rx="3.5" fill="#afe0f6"/><path d="M6.8 4 H29.6 L34.6 9 V36 H6.8 Z" fill="#efefef"/><path d="M29.6 4 L34.6 9 H29.6Z" fill="#d3d3d3"/><rect x="11.2" y="8.10" width="14.00" height="1.6" fill="#3b5b78"/><rect x="11.2" y="21.10" width="11.00" height="1.6" fill="#3b5b78"/><path d="M12.3 12.60 l1 1 l1.8 -2.1" fill="none" stroke="#f0524a" stroke-width="0.8"/><rect x="16.1" y="12.20" width="16.10" height="1.4" fill="#d8dcdf"/><path d="M12.3 16.70 l1 1 l1.8 -2.1" fill="none" stroke="#f0524a" stroke-width="0.8"/><rect x="16.1" y="16.30" width="10.90" height="1.4" fill="#d8dcdf"/><path d="M12.3 25.90 l1 1 l1.8 -2.1" fill="none" stroke="#f0524a" stroke-width="0.8"/><rect x="16.1" y="25.50" width="16.10" height="1.4" fill="#d8dcdf"/><path d="M12.3 30.10 l1 1 l1.8 -2.1" fill="none" stroke="#f0524a" stroke-width="0.8"/><rect x="16.1" y="29.70" width="10.90" height="1.4" fill="#d8dcdf"/></svg>
<svg style="position:absolute;left:459.52px;top:329.08px" width="40.5" height="40.5" viewBox="0 0 40 40"><rect width="40" height="40" rx="3.5" fill="#0b6eae"/><rect x="11.5" y="4" width="21.9" height="28" fill="#a0a8b4"/><rect x="9.3" y="6" width="22.2" height="28" fill="#cdd1d6"/><path d="M6.3 10.3 H22.9 L26.4 13.8 V36 H6.3 Z" fill="#efefef"/><path d="M22.9 10.3 L26.4 13.8 H22.9Z" fill="#d3d3d3"/><rect x="9.2" y="13.85" width="7.30" height="1.7" fill="#3b5b78"/><rect x="16.5" y="13.85" width="1.80" height="1.7" fill="#d8dcdf"/><rect x="9.2" y="17.95" width="4.40" height="1.7" fill="#3b5b78"/><rect x="13.6" y="17.95" width="2.00" height="1.7" fill="#d8dcdf"/><rect x="9.2" y="23.55" width="9.10" height="1.7" fill="#3b5b78"/><rect x="18.3" y="23.55" width="5.00" height="1.7" fill="#d8dcdf"/><rect x="9.2" y="27.45" width="7.30" height="1.7" fill="#3b5b78"/><rect x="16.5" y="27.45" width="5.10" height="1.7" fill="#d8dcdf"/><rect x="9.2" y="31.35" width="4.40" height="1.7" fill="#3b5b78"/><rect x="13.6" y="31.35" width="2.00" height="1.7" fill="#d8dcdf"/></svg>
<svg style="position:absolute;left:516.10px;top:329.08px" width="40.5" height="40.5" viewBox="0 0 40 40"><rect width="40" height="40" rx="3.5" fill="#0b6eae"/><rect x="19.5" y="6" width="1.5" height="4" fill="#ffd000"/><rect x="6" y="9.1" width="28.4" height="1.7" fill="#ffd000"/><rect x="8.1" y="10.8" width="24.3" height="18.2" fill="#efefef"/><rect x="19.5" y="29" width="1.5" height="3.6" fill="#ffd000"/><rect x="13" y="32.4" width="14.3" height="1.7" fill="#ffd000"/><polyline points="13.3,24.1 18.6,19 20.2,20.6 27.3,14.5" fill="none" stroke="#0b6eae" stroke-width="2.1" stroke-linejoin="miter"/></svg>
<svg style="position:absolute;left:572.68px;top:329.08px" width="40.5" height="40.5" viewBox="0 0 40 40"><rect width="40" height="40" rx="3.5" fill="#0b6eae"/><rect x="18.2" y="4" width="1.5" height="3.5" fill="#ffd000"/><rect x="5.1" y="7.1" width="27.8" height="1.7" fill="#ffd000"/><rect x="7.3" y="8.8" width="23.2" height="17.5" fill="#efefef"/><path d="M18.6 26.3 H20.1 V31.2 H12 V29.6 H18.6Z" fill="#ffd000"/><polyline points="12.05,21.6 17.2,16.6 18.8,18.2 26.3,12.2" fill="none" stroke="#0b6eae" stroke-width="2.1" stroke-linejoin="miter"/><g transform="translate(19 22.2)"><rect x="0" y="0" width="18.4" height="11" fill="#364a5c"/><rect x="0" y="11" width="18.4" height="1.10" fill="#cfcfcf"/><rect x="7.36" y="12.10" width="3.68" height="1.98" fill="#bdbdbd"/><rect x="5.52" y="14.08" width="7.36" height="0.66" fill="#dedede"/><path d="M9.2 5.94 V2.97 A2.97 2.97 0 1 0 12.17 5.94 Z" fill="#00b386"/><path d="M9.65 5.49 V2.52 A2.97 2.97 0 0 1 12.62 5.49 Z" fill="#ffd000"/></g></svg>
<svg style="position:absolute;left:629.26px;top:329.08px" width="40.5" height="40.5" viewBox="0 0 40 40"><rect width="40" height="40" rx="3.5" fill="#0b6eae"/><rect x="5.9" y="7.6" width="23.2" height="18" fill="#afe0f6"/><rect x="5.9" y="25.6" width="23.2" height="1.9" fill="#cfcfcf"/><rect x="15.3" y="27.5" width="4.4" height="2.2" fill="#bdbdbd"/><rect x="12.5" y="29.7" width="10" height="0.9" fill="#dedede"/><polyline points="12.3,21.3 17.3,16.6 19,18.2 26,11.8" fill="none" stroke="#0b6eae" stroke-width="2.1" stroke-linejoin="miter"/><g transform="translate(26.1 21.2) scale(1)"><path d="M0 0 H8.0 L10.6 2.6 V15.2 H0 Z" fill="#efefef"/><path d="M8.0 0 L10.6 2.6 H8.0 Z" fill="#d3d3d3"/><rect x="0.91" y="0.79" width="4.74" height="1.21" fill="#45627c"/><rect x="0.91" y="3.01" width="4.74" height="1.21" fill="#45627c"/><rect x="0.91" y="5.01" width="8.88" height="1.21" fill="#45627c"/><rect x="0.91" y="8.07" width="8.88" height="1.21" fill="#45627c"/><rect x="0.91" y="10.19" width="5.75" height="1.21" fill="#45627c"/><rect x="0.91" y="12.35" width="5.05" height="1.58" fill="#fff"/></g></svg>
<svg style="position:absolute;left:685.84px;top:329.08px" width="40.5" height="40.5" viewBox="0 0 40 40"><rect width="40" height="40" rx="3.5" fill="#fdbabd"/><rect x="12.1" y="4.1" width="20.4" height="24" fill="#c6c9cc"/><rect x="9" y="6.8" width="19.4" height="24" fill="#ececec"/><path d="M5.8 9.9 H20.5 L24.5 13.9 V33.5 H5.8Z" fill="#fdfdfd"/><path d="M20.5 9.9 L24.5 13.9 H20.5Z" fill="#dcdcdc"/><rect x="8" y="13.15" width="9.20" height="1.9" fill="#3b5b78"/><rect x="8" y="17.25" width="14.10" height="1.9" fill="#3b5b78"/><rect x="8" y="22.35" width="11.20" height="1.9" fill="#3b5b78"/><rect x="8" y="26.45" width="6.10" height="1.9" fill="#3b5b78"/><circle cx="27.8" cy="28.5" r="3.6" fill="#fff27a"/><path d="M20.1 28.4 H22 Q22.5 31.5 25 31.5 Q27 31.5 27.5 28 Q27.8 27.2 29 27.2 H34.4 V35.4 H23 Q20.1 35.4 20.1 32.5Z" fill="#0a6ec0"/><circle cx="24.6" cy="29.4" r="1.6" fill="#fff"/></svg>
<svg style="position:absolute;left:742.42px;top:329.08px" width="40.5" height="40.5" viewBox="0 0 40 40"><rect width="40" height="40" rx="3.5" fill="#0b6eae"/><rect x="17.4" y="4" width="1.5" height="3.5" fill="#ffd000"/><rect x="5.4" y="7.1" width="25.4" height="1.7" fill="#ffd000"/><rect x="7.2" y="8.8" width="21.3" height="15.2" fill="#efefef"/><path d="M17.4 24 H18.9 V28.6 H12 V27 H17.4Z" fill="#ffd000"/><g transform="translate(19.3 21.1)"><rect x="0" y="0" width="15.6" height="10.3" fill="#364a5c"/><rect x="0" y="10.3" width="15.6" height="1.03" fill="#cfcfcf"/><rect x="6.24" y="11.33" width="3.12" height="1.85" fill="#bdbdbd"/><rect x="4.68" y="13.18" width="6.24" height="0.62" fill="#dedede"/></g></svg>
<svg style="position:absolute;left:799.00px;top:329.08px" width="40.5" height="40.5" viewBox="0 0 40 40"><rect width="40" height="40" rx="3.5" fill="#afe0f6"/><g transform="translate(0 0) scale(1)"><rect x="7.3" y="7.2" width="25.7" height="28.8" rx="1.4" fill="#6e3a22"/><rect x="8.9" y="8.8" width="22.5" height="25.6" fill="#f1f1f1"/><path d="M14.2 6.2 H17.6 Q18 4 20.1 4 Q22.2 4 22.6 6.2 H26 V8.8 H14.2 Z" fill="#d88a5c"/><rect x="10.5" y="12.2" width="19.2" height="1.6" fill="#666"/><path d="M11 16.9 l0.9 0.9 l1.6 -1.9" fill="none" stroke="#f0524a" stroke-width="0.7"/><rect x="16.2" y="16.9" width="11.2" height="1.2" fill="#a8a8a8"/><path d="M11 21.0 l0.9 0.9 l1.6 -1.9" fill="none" stroke="#f0524a" stroke-width="0.7"/><rect x="16.2" y="21.0" width="11.2" height="1.2" fill="#a8a8a8"/><path d="M11 25.0 l0.9 0.9 l1.6 -1.9" fill="none" stroke="#f0524a" stroke-width="0.7"/><rect x="16.2" y="25.0" width="11.2" height="1.2" fill="#a8a8a8"/><path d="M11 29.0 l0.9 0.9 l1.6 -1.9" fill="none" stroke="#f0524a" stroke-width="0.7"/><rect x="16.2" y="29.0" width="11.2" height="1.2" fill="#a8a8a8"/></g></svg>
<svg style="position:absolute;left:855.58px;top:329.08px" width="40.5" height="40.5" viewBox="0 0 40 40"><rect width="40" height="40" rx="3.5" fill="#afe0f6"/><g transform="translate(0 0) scale(1)"><rect x="7.3" y="7.2" width="25.7" height="28.8" rx="1.4" fill="#6e3a22"/><rect x="8.9" y="8.8" width="22.5" height="25.6" fill="#f1f1f1"/><path d="M14.2 6.2 H17.6 Q18 4 20.1 4 Q22.2 4 22.6 6.2 H26 V8.8 H14.2 Z" fill="#d88a5c"/><circle cx="20.2" cy="15" r="3.9" fill="#0a72c4"/><rect x="10.5" y="21.2" width="19.2" height="1.6" fill="#3b5b78"/><path d="M11 24.7 l0.9 0.9 l1.6 -1.9" fill="none" stroke="#f0524a" stroke-width="0.7"/><rect x="15.5" y="24.599999999999998" width="14" height="1.3" fill="#3b5b78"/><path d="M11 28.7 l0.9 0.9 l1.6 -1.9" fill="none" stroke="#f0524a" stroke-width="0.7"/><rect x="15.5" y="28.599999999999998" width="14" height="1.3" fill="#3b5b78"/></g></svg>
<svg style="position:absolute;left:912.16px;top:329.08px" width="40.5" height="40.5" viewBox="0 0 40 40"><rect width="40" height="40" rx="3.5" fill="#fdbabd"/><g transform="translate(0 0) scale(1)"><rect x="7.3" y="7.2" width="25.7" height="28.8" rx="1.4" fill="#6e3a22"/><rect x="8.9" y="8.8" width="22.5" height="25.6" fill="#f1f1f1"/><path d="M14.2 6.2 H17.6 Q18 4 20.1 4 Q22.2 4 22.6 6.2 H26 V8.8 H14.2 Z" fill="#d88a5c"/><circle cx="20.2" cy="15" r="3.9" fill="#0a72c4"/><rect x="10.5" y="21.2" width="19.2" height="1.6" fill="#3b5b78"/><path d="M11 24.7 l0.9 0.9 l1.6 -1.9" fill="none" stroke="#f0524a" stroke-width="0.7"/><rect x="15.5" y="24.599999999999998" width="14" height="1.3" fill="#3b5b78"/><path d="M11 28.7 l0.9 0.9 l1.6 -1.9" fill="none" stroke="#f0524a" stroke-width="0.7"/><rect x="15.5" y="28.599999999999998" width="14" height="1.3" fill="#3b5b78"/></g><circle cx="30.6" cy="29.4" r="7.30" fill="#e8eef2" stroke="#1a7ecb" stroke-width="1.2"/><line x1="30.60" y1="24.34" x2="30.60" y2="23.24" stroke="#2f4d66" stroke-width="0.71"/><line x1="34.18" y1="25.82" x2="34.96" y2="25.04" stroke="#2f4d66" stroke-width="0.71"/><line x1="35.66" y1="29.40" x2="36.76" y2="29.40" stroke="#2f4d66" stroke-width="0.71"/><line x1="34.18" y1="32.98" x2="34.96" y2="33.76" stroke="#2f4d66" stroke-width="0.71"/><line x1="30.60" y1="34.46" x2="30.60" y2="35.56" stroke="#2f4d66" stroke-width="0.71"/><line x1="27.02" y1="32.98" x2="26.24" y2="33.76" stroke="#2f4d66" stroke-width="0.71"/><line x1="25.54" y1="29.40" x2="24.44" y2="29.40" stroke="#2f4d66" stroke-width="0.71"/><line x1="27.02" y1="25.82" x2="26.24" y2="25.04" stroke="#2f4d66" stroke-width="0.71"/><line x1="30.6" y1="29.4" x2="30.6" y2="25.61" stroke="#2f4d66" stroke-width="0.87"/><line x1="30.6" y1="29.4" x2="33.92" y2="29.40" stroke="#2f4d66" stroke-width="0.79"/><circle cx="30.6" cy="29.4" r="1.26" fill="#2f4d66"/></svg>
<svg style="position:absolute;left:968.74px;top:329.08px" width="40.5" height="40.5" viewBox="0 0 40 40"><rect width="40" height="40" rx="3.5" fill="#afe0f6"/><g transform="translate(6 7.8)"><rect x="0" y="0" width="28" height="18.3" fill="#364a5c"/><rect x="0" y="18.3" width="28" height="1.83" fill="#cfcfcf"/><rect x="11.20" y="20.13" width="5.60" height="3.29" fill="#bdbdbd"/><rect x="8.40" y="23.42" width="11.20" height="1.10" fill="#dedede"/><path d="M14.0 9.882000000000001 V4.941000000000001 A4.941000000000001 4.941000000000001 0 1 0 18.941000000000003 9.882000000000001 Z" fill="#00b386"/><path d="M14.74 9.14 V4.20 A4.941000000000001 4.941000000000001 0 0 1 19.68 9.14 Z" fill="#ffd000"/></g></svg>
<svg style="position:absolute;left:1025.32px;top:329.08px" width="40.5" height="40.5" viewBox="0 0 40 40"><rect width="40" height="40" rx="3.5" fill="#afc86b"/><g transform="translate(6 7.8)"><rect x="0" y="0" width="28" height="18.3" fill="#364a5c"/><rect x="0" y="18.3" width="28" height="1.83" fill="#cfcfcf"/><rect x="11.20" y="20.13" width="5.60" height="3.29" fill="#bdbdbd"/><rect x="8.40" y="23.42" width="11.20" height="1.10" fill="#dedede"/><path d="M14.0 9.882000000000001 V4.941000000000001 A4.941000000000001 4.941000000000001 0 1 0 18.941000000000003 9.882000000000001 Z" fill="#00b386"/><path d="M14.74 9.14 V4.20 A4.941000000000001 4.941000000000001 0 0 1 19.68 9.14 Z" fill="#ffd000"/></g><g transform="translate(26 21.8) scale(1)"><path d="M0 0 H8.200000000000001 L10.8 2.6 V15.5 H0 Z" fill="#efefef"/><path d="M8.200000000000001 0 L10.8 2.6 H8.200000000000001 Z" fill="#d3d3d3"/><rect x="0.93" y="0.81" width="4.83" height="1.24" fill="#45627c"/><rect x="0.93" y="3.07" width="4.83" height="1.24" fill="#45627c"/><rect x="0.93" y="5.11" width="9.05" height="1.24" fill="#45627c"/><rect x="0.93" y="8.23" width="9.05" height="1.24" fill="#45627c"/><rect x="0.93" y="10.39" width="5.86" height="1.24" fill="#45627c"/><rect x="0.93" y="12.59" width="5.14" height="1.61" fill="#fff"/></g></svg>
<svg style="position:absolute;left:1081.90px;top:329.08px" width="40.5" height="40.5" viewBox="0 0 40 40"><rect width="40" height="40" rx="3.5" fill="#fdbabd"/><rect x="17.9" y="2.8" width="1.8" height="4" fill="#364a5c"/><rect x="3.1" y="5.9" width="29.6" height="1.8" fill="#364a5c"/><rect x="6" y="7.7" width="23.8" height="17.8" fill="#efefef"/><path d="M13.3 16 V10.5 A5.5 5.5 0 1 0 18.8 16Z" fill="#00b386"/><path d="M14.8 14.6 V9.3 A5.3 5.3 0 0 1 20.1 14.6Z" fill="#ffd000"/><rect x="22.1" y="9.9" width="6.6" height="1.6" fill="#364a5c"/><rect x="22.1" y="12.9" width="6.6" height="1.6" fill="#364a5c"/><rect x="17.7" y="25.5" width="1.8" height="5.5" fill="#ffd000"/><rect x="10.8" y="31.1" width="13.5" height="1.8" fill="#364a5c"/><g transform="translate(15.35 13.6) scale(0.65)"><path d="M6.5 35.2 C6.5 30.2 8.3 28.2 11.8 27.2 L16.5 25.8 H23.5 L28.2 27.2 C31.7 28.2 33.5 30.2 33.5 35.2 Z" fill="#5f5f5f"/><path d="M11 28 C9 29.5 8.5 31.5 8.5 35.2 H6.5 C6.5 31 7.6 29 11 28Z" fill="#4a4a4a"/><path d="M16.2 25.8 H23.8 L21.3 35.2 H18.7 Z" fill="#f4f4f4"/><path d="M15.6 26 L18.7 35.2 H16.6 L14.2 27 Z M24.4 26 L21.3 35.2 H23.4 L25.8 27Z" fill="#777"/><path d="M19.1 27.6 H20.9 L21.5 35.2 H18.5 Z" fill="#0b72c4"/><rect x="17.3" y="21.5" width="5.4" height="4.8" fill="#f5c8b3"/><path d="M17.3 25.2 Q20 27.2 22.7 25.2 V26 Q20 28 17.3 26Z" fill="#efb9a0"/><circle cx="12.7" cy="17.2" r="1.6" fill="#fad3c3"/><circle cx="27.3" cy="17.2" r="1.6" fill="#fad3c3"/><path d="M12.8 15 C12.8 10.5 16 9 20 9 C24 9 27.2 10.5 27.2 15 C27.2 21 24.7 24.9 20 24.9 C15.3 24.9 12.8 21 12.8 15 Z" fill="#fde1d5"/><path d="M11.9 16.8 C10.9 8.6 14.2 4.8 20 4.8 C25.8 4.8 29.1 8.6 28.1 16.2 C27.4 13.2 25 11.3 21.3 11.3 C17 11.3 13.6 13.2 11.9 16.8 Z" fill="#7b4a19"/></g></svg>
<svg style="position:absolute;left:1138.48px;top:329.08px" width="40.5" height="40.5" viewBox="0 0 40 40"><rect width="40" height="40" rx="3.5" fill="#fdbabd"/><rect x="15.5" y="2.8" width="1.6" height="3.5" fill="#364a5c"/><rect x="2.8" y="5.3" width="27" height="1.6" fill="#364a5c"/><rect x="5.3" y="6.9" width="22" height="15.6" fill="#efefef"/><path d="M12.3 14.8 V9.8 A5 5 0 1 0 17.3 14.8Z" fill="#00b386"/><path d="M13.6 13.5 V8.7 A4.8 4.8 0 0 1 18.4 13.5Z" fill="#ffd000"/><rect x="19.9" y="7.9" width="5.9" height="1.5" fill="#364a5c"/><rect x="19.9" y="11.2" width="5.9" height="1.5" fill="#364a5c"/><rect x="9" y="28.2" width="3" height="1.4" fill="#364a5c"/><path d="M18.3 19.9 H37.9 V34.9 L35.9 36.4 H16.3Z" fill="#c8ccd0"/><rect x="14.1" y="23.9" width="20.2" height="13.5" fill="#efefef"/><rect x="16" y="25.9" width="3.9" height="9.5" fill="#0a6eb8"/><rect x="21.3" y="25.9" width="2.4" height="1.5" fill="#364a5c"/><rect x="25" y="25.9" width="4.6" height="1.5" fill="#364a5c"/><rect x="21.3" y="28.5" width="8.3" height="1.3" fill="#5a7590"/><rect x="21.3" y="32.1" width="8.3" height="1.3" fill="#5a7590"/><rect x="21.3" y="34.3" width="8.3" height="1.3" fill="#5a7590"/></svg>
<svg style="position:absolute;left:1195.06px;top:329.08px" width="40.5" height="40.5" viewBox="0 0 40 40"><rect width="40" height="40" rx="3.5" fill="#fdbabd"/><path d="M7.5 10.5 L9.5 8 H36 V27.5 L34 30 H7.5Z" fill="#c6c9cc"/><rect x="5.3" y="10.8" width="28.5" height="18.8" fill="#efefef"/><rect x="7.3" y="12.6" width="6.6" height="10.2" fill="#00b386"/><rect x="7.3" y="24.2" width="6.6" height="1.2" fill="#364a5c"/><rect x="7.3" y="26.5" width="6.6" height="1.2" fill="#364a5c"/><rect x="17" y="13.7" width="3" height="1.5" fill="#364a5c"/><rect x="23" y="13.7" width="7.5" height="1.5" fill="#364a5c"/><rect x="17" y="16.4" width="13.5" height="1.2" fill="#364a5c"/><rect x="17" y="20.3" width="13.5" height="1.2" fill="#364a5c"/><rect x="17" y="22.3" width="13.5" height="1.2" fill="#364a5c"/><rect x="17" y="25.4" width="13.5" height="1.6" fill="#364a5c"/></svg>
<svg style="position:absolute;left:233.20px;top:385.66px" width="40.5" height="40.5" viewBox="0 0 40 40"><rect width="40" height="40" rx="3.5" fill="#fdbabd"/><circle cx="20.1" cy="19.9" r="13.85" fill="#e8eef2" stroke="#0a6eb8" stroke-width="2.1"/><line x1="20.10" y1="10.36" x2="20.10" y2="8.28" stroke="#2f4d66" stroke-width="0.97"/><line x1="26.84" y1="13.16" x2="28.32" y2="11.68" stroke="#2f4d66" stroke-width="0.97"/><line x1="29.64" y1="19.90" x2="31.72" y2="19.90" stroke="#2f4d66" stroke-width="0.97"/><line x1="26.84" y1="26.64" x2="28.32" y2="28.12" stroke="#2f4d66" stroke-width="0.97"/><line x1="20.10" y1="29.44" x2="20.10" y2="31.52" stroke="#2f4d66" stroke-width="0.97"/><line x1="13.36" y1="26.64" x2="11.88" y2="28.12" stroke="#2f4d66" stroke-width="0.97"/><line x1="10.56" y1="19.90" x2="8.48" y2="19.90" stroke="#2f4d66" stroke-width="0.97"/><line x1="13.36" y1="13.16" x2="11.88" y2="11.68" stroke="#2f4d66" stroke-width="0.97"/><line x1="20.1" y1="19.9" x2="20.1" y2="12.75" stroke="#2f4d66" stroke-width="1.20"/><line x1="20.1" y1="19.9" x2="24.89" y2="23.92" stroke="#2f4d66" stroke-width="1.10"/><circle cx="20.1" cy="19.9" r="2.23" fill="#2f4d66"/></svg>
<svg style="position:absolute;left:289.78px;top:385.66px" width="40.5" height="40.5" viewBox="0 0 40 40"><rect width="40" height="40" rx="3.5" fill="#fdbabd"/><g transform="translate(4.9 5.3)"><rect x="0" y="0" width="26" height="26.3" fill="#fdf7bf"/><rect x="0" y="0" width="26" height="4.47" fill="#0a6eb0"/><rect x="4.68" y="-1" width="2" height="3" fill="#e6e6e6"/><rect x="19.24" y="-1" width="2" height="3" fill="#e6e6e6"/><circle cx="13.00" cy="13.94" r="3.8" fill="#f4584a"/><line x1="17.30" y1="13.94" x2="19.00" y2="13.94" stroke="#f7907a" stroke-width="0.7"/><line x1="16.72" y1="16.09" x2="18.20" y2="16.94" stroke="#f7907a" stroke-width="0.7"/><line x1="15.15" y1="17.66" x2="16.00" y2="19.14" stroke="#f7907a" stroke-width="0.7"/><line x1="13.00" y1="18.24" x2="13.00" y2="19.94" stroke="#f7907a" stroke-width="0.7"/><line x1="10.85" y1="17.66" x2="10.00" y2="19.14" stroke="#f7907a" stroke-width="0.7"/><line x1="9.28" y1="16.09" x2="7.80" y2="16.94" stroke="#f7907a" stroke-width="0.7"/><line x1="8.70" y1="13.94" x2="7.00" y2="13.94" stroke="#f7907a" stroke-width="0.7"/><line x1="9.28" y1="11.79" x2="7.80" y2="10.94" stroke="#f7907a" stroke-width="0.7"/><line x1="10.85" y1="10.22" x2="10.00" y2="8.74" stroke="#f7907a" stroke-width="0.7"/><line x1="13.00" y1="9.64" x2="13.00" y2="7.94" stroke="#f7907a" stroke-width="0.7"/><line x1="15.15" y1="10.22" x2="16.00" y2="8.74" stroke="#f7907a" stroke-width="0.7"/><line x1="16.72" y1="11.79" x2="18.20" y2="10.94" stroke="#f7907a" stroke-width="0.7"/></g><g transform="translate(22.3 18.8) scale(1)"><path d="M0 0 H10.8 L14 3.2 V17.5 H0 Z" fill="#efefef"/><path d="M10.8 0 L14 3.2 H10.8 Z" fill="#d3d3d3"/><rect x="2.09" y="2.4" width="3.76" height="1.15" fill="#3b5b78"/><rect x="2.09" y="4.6" width="5.22" height="1.15" fill="#3b5b78"/><rect x="2.09" y="6.8" width="9.93" height="1.15" fill="#3b5b78"/><path d="M7.00 8.95 L10.20 12.37 H8.20 V15.89 H5.80 V12.37 H3.80 Z" fill="#f0524a"/></g></svg>
<svg style="position:absolute;left:346.36px;top:385.66px" width="40.5" height="40.5" viewBox="0 0 40 40"><rect width="40" height="40" rx="3.5" fill="#afc86b"/><g transform="translate(4.9 5.3)"><rect x="0" y="0" width="26" height="26.3" fill="#fdf7bf"/><rect x="0" y="0" width="26" height="4.47" fill="#0a6eb0"/><rect x="4.68" y="-1" width="2" height="3" fill="#e6e6e6"/><rect x="19.24" y="-1" width="2" height="3" fill="#e6e6e6"/><circle cx="13.00" cy="13.94" r="3.8" fill="#f4584a"/><line x1="17.30" y1="13.94" x2="19.00" y2="13.94" stroke="#f7907a" stroke-width="0.7"/><line x1="16.72" y1="16.09" x2="18.20" y2="16.94" stroke="#f7907a" stroke-width="0.7"/><line x1="15.15" y1="17.66" x2="16.00" y2="19.14" stroke="#f7907a" stroke-width="0.7"/><line x1="13.00" y1="18.24" x2="13.00" y2="19.94" stroke="#f7907a" stroke-width="0.7"/><line x1="10.85" y1="17.66" x2="10.00" y2="19.14" stroke="#f7907a" stroke-width="0.7"/><line x1="9.28" y1="16.09" x2="7.80" y2="16.94" stroke="#f7907a" stroke-width="0.7"/><line x1="8.70" y1="13.94" x2="7.00" y2="13.94" stroke="#f7907a" stroke-width="0.7"/><line x1="9.28" y1="11.79" x2="7.80" y2="10.94" stroke="#f7907a" stroke-width="0.7"/><line x1="10.85" y1="10.22" x2="10.00" y2="8.74" stroke="#f7907a" stroke-width="0.7"/><line x1="13.00" y1="9.64" x2="13.00" y2="7.94" stroke="#f7907a" stroke-width="0.7"/><line x1="15.15" y1="10.22" x2="16.00" y2="8.74" stroke="#f7907a" stroke-width="0.7"/><line x1="16.72" y1="11.79" x2="18.20" y2="10.94" stroke="#f7907a" stroke-width="0.7"/></g><g transform="translate(22.3 19.3) scale(1)"><path d="M0 0 H11 L14 3 V17.5 H0 Z" fill="#efefef"/><path d="M11 0 L14 3 H11 Z" fill="#d3d3d3"/><rect x="1.9" y="2.2" width="6" height="1" fill="#3b5b78"/><rect x="1.9" y="4.4" width="4" height="1" fill="#3b5b78"/><rect x="1.9" y="6.6" width="10" height="1" fill="#3b5b78"/><path d="M6.8 10.3 V14.8 A4.5 4.5 0 1 1 2.3 10.3Z" transform="translate(3.5 -2)" fill="#0a72c4"/><path d="M11.3 9.3 A4.5 4.5 0 0 1 7.3 13.8 V9.3Z" transform="translate(0 -1)" fill="#8fd3f5"/></g></svg>
<svg style="position:absolute;left:402.94px;top:385.66px" width="40.5" height="40.5" viewBox="0 0 40 40"><rect width="40" height="40" rx="3.5" fill="#afc86b"/><path d="M7.3 6 H14.5 L16 7.7 H31.5 V30 H7.3Z" fill="#c0875a"/><rect x="9" y="10.5" width="21.5" height="7" fill="#d4dadd"/><rect x="8.4" y="12.2" width="22.5" height="7" fill="#f2f2f2"/><rect x="11" y="14.2" width="7" height="2.8" fill="#0a72c4"/><rect x="19.8" y="14.2" width="7" height="1.9" fill="#364a5c"/><path d="M6.3 19.3 H32.3 L31.3 33.6 H7.6Z" fill="#fbab67"/></svg>
<svg style="position:absolute;left:459.52px;top:385.66px" width="40.5" height="40.5" viewBox="0 0 40 40"><rect width="40" height="40" rx="3.5" fill="#afe0f6"/><path d="M7.5 5.2 H15 L16.5 7.8 H33 V30 H7.5Z" fill="#c0875a"/><rect x="9.5" y="11.3" width="21" height="6" fill="#d6dadc"/><rect x="8.5" y="14.5" width="23" height="5.5" fill="#fafafa"/><path d="M5.4 17.9 H34.6 L33.3 35.6 H7Z" fill="#fdaf4b"/></svg>
<svg style="position:absolute;left:516.10px;top:385.66px" width="40.5" height="40.5" viewBox="0 0 40 40"><rect width="40" height="40" rx="3.5" fill="#afe0f6"/><rect x="7.6" y="3.8" width="6.4" height="14" rx="0.8" fill="#98a3b0"/><rect x="13.5" y="3.8" width="6.4" height="14" fill="#2dc653"/><rect x="19.4" y="3.8" width="6.4" height="14" fill="#0096f0"/><rect x="25.3" y="3.8" width="6.4" height="14" rx="0.8" fill="#0a72c4"/><g fill="#f2f2f2"><rect x="10" y="6" width="1.6" height="6"/><rect x="15.9" y="6" width="1.6" height="6"/><rect x="21.8" y="6" width="1.6" height="6"/><rect x="27.7" y="6" width="1.6" height="6"/></g><rect x="6.8" y="17.3" width="26.5" height="1.8" rx="0.9" fill="#364a5c"/><rect x="7.4" y="19.1" width="25.3" height="17.6" rx="1.2" fill="#efefef"/><rect x="17.8" y="24.8" width="4.4" height="1.2" fill="#364a5c"/></svg>
<svg style="position:absolute;left:572.68px;top:385.66px" width="40.5" height="40.5" viewBox="0 0 40 40"><rect width="40" height="40" rx="3.5" fill="#afe0f6"/><g transform="translate(9.1 4.6)"><rect x="0" y="0" width="23" height="32" fill="#0a6eb8"/><rect x="2.00" y="2.00" width="3.7" height="3.7" fill="#f0f0f0"/><rect x="7.10" y="2.00" width="3.7" height="3.7" fill="#f0f0f0"/><rect x="12.20" y="2.00" width="3.7" height="3.7" fill="#f0f0f0"/><rect x="17.30" y="2.00" width="3.7" height="3.7" fill="#f0f0f0"/><rect x="2.00" y="7.10" width="3.7" height="3.7" fill="#f0f0f0"/><rect x="7.10" y="7.10" width="3.7" height="3.7" fill="#f0f0f0"/><rect x="12.20" y="7.10" width="3.7" height="3.7" fill="#f0f0f0"/><rect x="17.30" y="7.10" width="3.7" height="3.7" fill="#f0f0f0"/><rect x="2.00" y="12.20" width="3.7" height="3.7" fill="#f0f0f0"/><rect x="7.10" y="12.20" width="3.7" height="3.7" fill="#f0f0f0"/><rect x="12.20" y="12.20" width="3.7" height="3.7" fill="#f0f0f0"/><rect x="17.30" y="12.20" width="3.7" height="3.7" fill="#f0f0f0"/><rect x="2.00" y="17.30" width="3.7" height="3.7" fill="#f0f0f0"/><rect x="7.10" y="17.30" width="3.7" height="3.7" fill="#f0f0f0"/><rect x="12.20" y="17.30" width="3.7" height="3.7" fill="#f0f0f0"/><rect x="17.30" y="17.30" width="3.7" height="3.7" fill="#f0f0f0"/><rect x="3.2" y="24.2" width="6.3" height="7.8" fill="#fdf7a0"/><rect x="5" y="27" width="0.8" height="1.1" fill="#364a5c"/><rect x="6.9" y="27" width="0.8" height="1.1" fill="#364a5c"/></g></svg>
<svg style="position:absolute;left:629.26px;top:385.66px" width="40.5" height="40.5" viewBox="0 0 40 40"><rect width="40" height="40" rx="3.5" fill="#afe0f6"/><g transform="translate(8.9 4.6)"><rect x="0" y="0" width="23" height="32" fill="#0a6eb8"/><rect x="2.00" y="2.00" width="3.7" height="3.7" fill="#f0f0f0"/><rect x="7.10" y="2.00" width="3.7" height="3.7" fill="#f0f0f0"/><rect x="12.20" y="2.00" width="3.7" height="3.7" fill="#f0f0f0"/><rect x="17.30" y="2.00" width="3.7" height="3.7" fill="#f0f0f0"/><rect x="2.00" y="7.10" width="3.7" height="3.7" fill="#f0f0f0"/><rect x="7.10" y="7.10" width="3.7" height="3.7" fill="#f0f0f0"/><rect x="12.20" y="7.10" width="3.7" height="3.7" fill="#f0f0f0"/><rect x="17.30" y="7.10" width="3.7" height="3.7" fill="#f0f0f0"/><rect x="2.00" y="12.20" width="3.7" height="3.7" fill="#f0f0f0"/><rect x="7.10" y="12.20" width="3.7" height="3.7" fill="#f0f0f0"/><rect x="12.20" y="12.20" width="3.7" height="3.7" fill="#f0f0f0"/><rect x="17.30" y="12.20" width="3.7" height="3.7" fill="#f0f0f0"/><rect x="2.00" y="17.30" width="3.7" height="3.7" fill="#f0f0f0"/><rect x="7.10" y="17.30" width="3.7" height="3.7" fill="#f0f0f0"/><rect x="12.20" y="17.30" width="3.7" height="3.7" fill="#f0f0f0"/><rect x="17.30" y="17.30" width="3.7" height="3.7" fill="#f0f0f0"/><rect x="3.2" y="24.2" width="6.3" height="7.8" fill="#fdf7a0"/><rect x="5" y="27" width="0.8" height="1.1" fill="#364a5c"/><rect x="6.9" y="27" width="0.8" height="1.1" fill="#364a5c"/></g><rect x="21.3" y="21.8" width="17" height="1.2" fill="#e8c44a"/><rect x="22.3" y="23" width="15" height="10.4" fill="#364a5c"/><polyline points="24.5,30.5 27.5,27.5 29,28.5 33.5,25" fill="none" stroke="#d0d0d0" stroke-width="1.2"/><rect x="29.6" y="33.4" width="0.9" height="3" fill="#e8c44a"/><rect x="26.5" y="36.1" width="7" height="1" fill="#e8c44a"/></svg>
<svg style="position:absolute;left:685.84px;top:385.66px" width="40.5" height="40.5" viewBox="0 0 40 40"><rect width="40" height="40" rx="3.5" fill="#afe0f6"/><circle cx="13.1" cy="13.4" r="9.5" fill="#f0284e"/><path d="M7.5 19.5 L7.3 24.4 L12 21Z" fill="#f0284e"/><text x="13.1" y="17.4" font-family="Liberation Sans" font-weight="bold" font-size="11.5" fill="#fff" text-anchor="middle">Q</text><circle cx="26.7" cy="24.7" r="9.5" fill="#0a72c4"/><path d="M32 31 L32.8 35.5 L28 33Z" fill="#0a72c4"/><text x="26.7" y="28.7" font-family="Liberation Sans" font-size="11" fill="#fff" text-anchor="middle">A</text></svg>
<svg style="position:absolute;left:742.42px;top:385.66px" width="40.5" height="40.5" viewBox="0 0 40 40"><rect width="40" height="40" rx="3.5" fill="#afe0f6"/><path d="M7.2 3.5 H23.3 V15.8 H12.8 L11.5 17.5 L10.3 15.8 H7.2Z" fill="#ffd000"/><g fill="#fff7b0"><rect x="9" y="5.2" width="12" height="0.8"/><rect x="9" y="6.9" width="10" height="0.8"/><rect x="9" y="8.6" width="8" height="0.8"/><rect x="9" y="10.3" width="10.5" height="0.8"/><rect x="9" y="12" width="6" height="0.8"/></g><rect x="30" y="15.5" width="2.3" height="6" fill="#c8c8c8"/><path d="M3.5 22.8 L12.5 18.3 V22.8 L21.5 18.3 V22.8 L34.8 18.3 V37 H3.5Z" fill="#0a6eb8"/><g fill="#f3ef78"><rect x="6.5" y="27.8" width="6.5" height="1.4"/><rect x="16.3" y="27.8" width="6.5" height="1.4"/><rect x="26" y="27.8" width="6.5" height="1.4"/></g><rect x="16" y="33.5" width="7.5" height="3.5" fill="#c8c8c8"/></svg>
<svg style="position:absolute;left:799.00px;top:385.66px" width="40.5" height="40.5" viewBox="0 0 40 40"><rect width="40" height="40" rx="3.5" fill="#afe0f6"/><rect x="6.9" y="3.9" width="25.8" height="31.6" fill="#f9ab67"/><path d="M7.3 3.9 H32.3 L27.5 9.8 H12.3Z" fill="#fdd3a0"/><path d="M7.3 35.5 H32.3 L26.5 31.6 H12.6Z" fill="#fdd3a0"/><line x1="19.8" y1="18.5" x2="19.8" y2="31.6" stroke="#e39a5f" stroke-width="0.6"/><path d="M19.4 8.5 Q18.3 13 19.4 17.5 M20.2 8.5 Q21.3 13 20.2 17.5" fill="none" stroke="#364a5c" stroke-width="1"/><circle cx="19.8" cy="7.5" r="1.9" fill="#e8413a"/><circle cx="19.8" cy="18.5" r="1.9" fill="#e8413a"/><circle cx="19.8" cy="7.5" r="0.6" fill="#f7b0b0"/><circle cx="19.8" cy="18.5" r="0.6" fill="#f7b0b0"/></svg>
<svg style="position:absolute;left:855.58px;top:385.66px" width="40.5" height="40.5" viewBox="0 0 40 40"><rect width="40" height="40" rx="3.5" fill="#fdbabd"/><g transform="rotate(14 12 22)"><rect x="9" y="5.2" width="6.6" height="30.3" fill="#2dc653"/><rect x="11" y="8" width="2.6" height="9" fill="#f2f2f2"/><circle cx="12.3" cy="30.5" r="1.5" fill="#f2f2f2"/></g><rect x="19.7" y="5.2" width="6.4" height="30.3" fill="#0096f0"/><rect x="21.6" y="8" width="2.6" height="9" fill="#f2f2f2"/><circle cx="22.9" cy="31.5" r="1.5" fill="#f2f2f2"/><rect x="26.1" y="5.2" width="6.4" height="30.3" rx="0.6" fill="#364a5c"/><rect x="28" y="8" width="2.6" height="9" fill="#f2f2f2"/><circle cx="29.3" cy="31.5" r="1.5" fill="#f2f2f2"/></svg>
<svg style="position:absolute;left:912.16px;top:385.66px" width="40.5" height="40.5" viewBox="0 0 40 40"><rect width="40" height="40" rx="3.5" fill="#fdbabd"/><path d="M2.8 4.8 H32.3 L36.5 9 V31.6 H2.8Z" fill="#364a5c"/><path d="M32.3 4.8 L36.5 9 H32.3Z" fill="#d3d3d3"/><rect x="10.8" y="7.8" width="11.6" height="2.7" fill="#f2f2f2"/><rect x="5.7" y="14.8" width="20" height="1.9" fill="#f2f2f2"/><rect x="25.7" y="14.8" width="8.9" height="1.9" fill="#cfd5da"/><rect x="5.7" y="18.7" width="9" height="1.9" fill="#f2f2f2"/><rect x="14.7" y="18.7" width="5" height="1.9" fill="#cfd5da"/><rect x="5.7" y="22.6" width="9" height="1.9" fill="#f2f2f2"/><rect x="14.7" y="22.6" width="5" height="1.9" fill="#cfd5da"/><rect x="5.7" y="26.5" width="5" height="1.9" fill="#f2f2f2"/><rect x="10.7" y="26.5" width="9" height="1.9" fill="#cfd5da"/><g transform="translate(23.4 19.5) scale(1)"><path d="M0 0 H9.899999999999999 L13.1 3.2 V16.7 H0 Z" fill="#efefef"/><path d="M9.899999999999999 0 L13.1 3.2 H9.899999999999999 Z" fill="#d3d3d3"/><rect x="1.96" y="2.4" width="3.52" height="1.15" fill="#3b5b78"/><rect x="1.96" y="4.6" width="4.89" height="1.15" fill="#3b5b78"/><rect x="1.96" y="6.8" width="9.29" height="1.15" fill="#3b5b78"/><path d="M6.55 8.54 L9.75 11.81 H7.75 V15.16 H5.35 V11.81 H3.35 Z" fill="#f0524a"/></g></svg>
<svg style="position:absolute;left:968.74px;top:385.66px" width="40.5" height="40.5" viewBox="0 0 40 40"><rect width="40" height="40" rx="3.5" fill="#fdbabd"/><path d="M3.55 17.07 A16.3 16.3 0 0 1 30.92 8.17 L23.98 15.37 A6.3 6.3 0 0 0 13.40 18.81 Z" fill="#afe0f6"/><polygon points="19.60,4.10 19.92,1.30 30.58,8.53" fill="#afe0f6"/><path d="M30.92 8.17 A16.3 16.3 0 0 1 20.74 36.16 L20.04 26.18 A6.3 6.3 0 0 0 23.98 15.37 Z" fill="#7fb0cd"/><polygon points="33.28,27.80 35.54,29.48 20.70,35.66" fill="#7fb0cd"/><path d="M20.74 36.16 A16.3 16.3 0 0 1 3.55 17.07 L13.40 18.81 A6.3 6.3 0 0 0 20.04 26.18 Z" fill="#0b6fae"/><polygon points="5.92,27.80 3.33,28.92 4.04,17.16" fill="#0b6fae"/><text x="20.25" y="23.5" font-family="Liberation Sans" font-weight="bold" font-size="10.6" fill="#2f4258" stroke="#2f4258" stroke-width="0.45" text-anchor="middle">KPT</text></svg>
<svg style="position:absolute;left:1025.32px;top:385.66px" width="40.5" height="40.5" viewBox="0 0 40 40"><rect width="40" height="40" rx="3.5" fill="#0b6eae"/><circle cx="20" cy="16.5" r="11.5" fill="#ffcc00"/><path d="M12 23 H28 L26 28.5 H14Z" fill="#ffcc00"/><circle cx="20" cy="15.5" r="2.5" fill="#fff"/><rect x="19.2" y="15.5" width="1.6" height="12.5" fill="#fff"/><rect x="13.3" y="30.2" width="13.4" height="1.8" fill="#fff"/><rect x="15.6" y="33.8" width="8.8" height="1.8" fill="#fff"/></svg>
<svg style="position:absolute;left:1081.90px;top:385.66px" width="40.5" height="40.5" viewBox="0 0 40 40"><rect width="40" height="40" rx="3.5" fill="#0b6eae"/><path d="M20 5.5 L32.6 12.8 V27.3 L20 34.6 L7.4 27.3 V12.8Z" fill="#e6e6e6"/><path d="M15.8 17 L11.2 20.2 L15.8 23.4 M18.3 25 L21.7 15 M24.2 17 L28.8 20.2 L24.2 23.4" fill="none" stroke="#555" stroke-width="1.3"/></svg><!--/ICONS-->
<div class="lbl" style="top:490px">アプリ名を編集</div>
<div class="box" style="left:201px;top:523px;width:1067px;height:38px;border-color:#888"><div class="abs" style="left:12px;top:9px;font-size:14px;line-height:18px;color:#333">出席簿管理</div></div>
<div class="lbl" style="top:604px">アプリの説明を編集</div>
<div class="box" style="left:201px;top:637px;width:1067px;height:274px;border-color:#888"><div class="abs" style="left:14px;top:8.5px;font-size:14px;line-height:18px;color:#333;letter-spacing:0.11px;white-space:nowrap">業務・イベントなどで出欠の管理を行いたい場合など、このアプリで出欠の記録を付けられます。</div></div>
<div class="abs" style="left:1247px;top:838px;width:136px;height:49px;border-radius:25px;background:#0070bb">
 <svg class="abs" style="left:21px;top:13px" width="23" height="23" viewBox="0 0 23 23"><circle cx="11.5" cy="11.5" r="9.6" fill="none" stroke="#fff" stroke-width="2"/><path d="M8.3 9.2 C8.3 7.2 9.7 6.2 11.5 6.2 C13.3 6.2 14.6 7.3 14.6 8.9 C14.6 10.9 12.3 11 12.3 13.2" fill="none" stroke="#fff" stroke-width="1.9"/><circle cx="12.3" cy="16.3" r="1.2" fill="#fff"/></svg>
 <div class="abs" style="left:51px;top:14px;font-size:15px;font-weight:bold;color:#fff;line-height:20px;letter-spacing:0.6px;white-space:nowrap">サポート</div>
</div>
</body></html>
